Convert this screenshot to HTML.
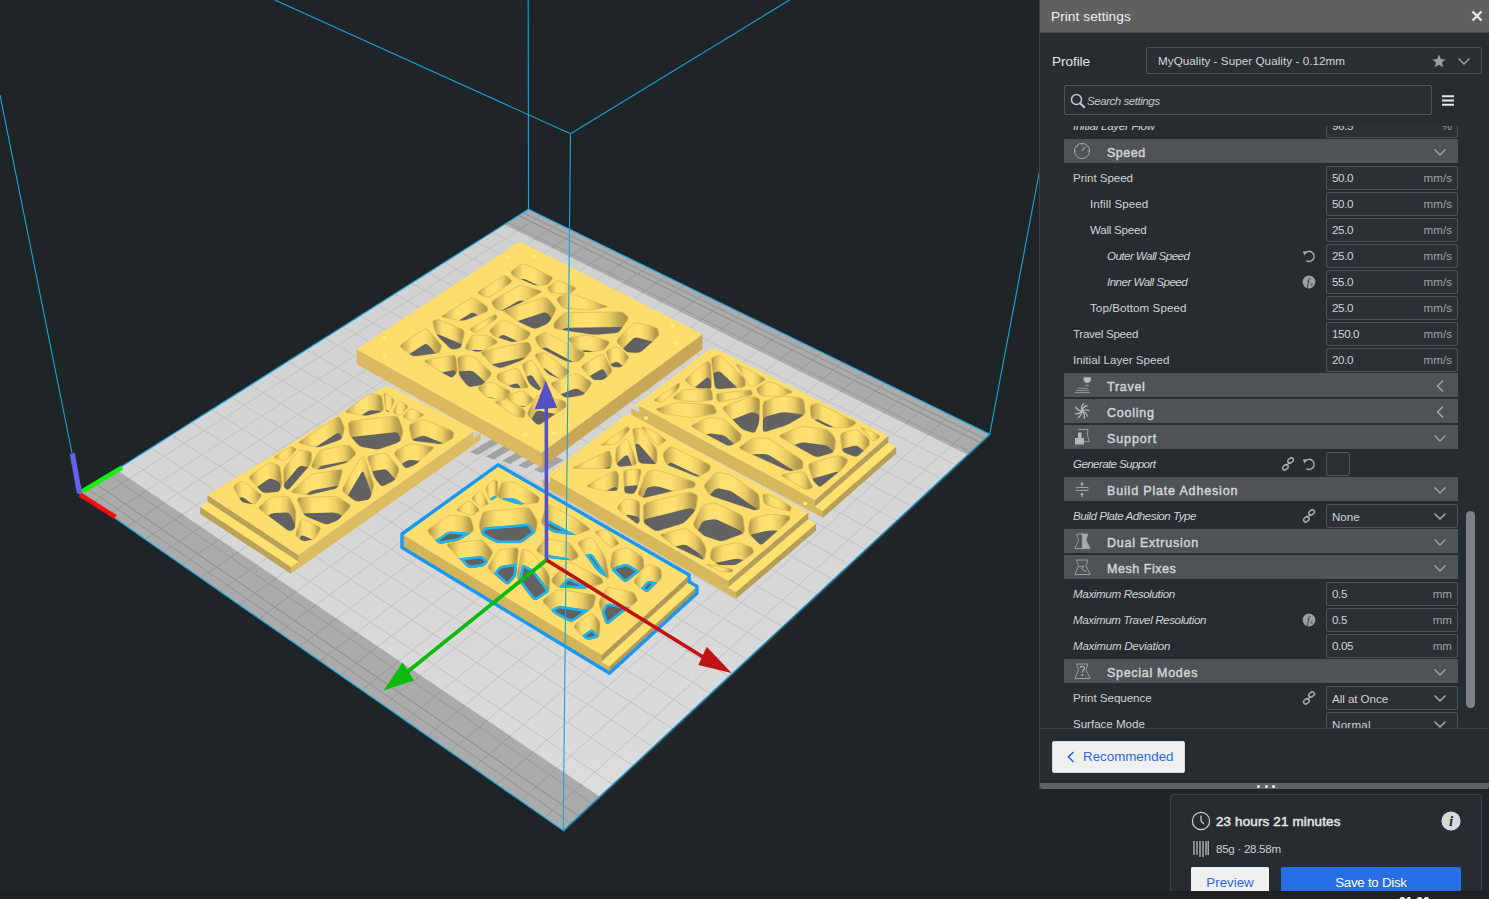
<!DOCTYPE html>
<html lang="en"><head><meta charset="utf-8"><title>Cura</title>
<style>
*{box-sizing:border-box;margin:0;padding:0}
html,body{width:1489px;height:899px;overflow:hidden;background:#1f2427;font-family:"Liberation Sans",sans-serif;color:#d6d7d7}
#scene{position:absolute;left:0;top:0;width:1489px;height:899px}
#panel{position:absolute;left:1039px;top:0;width:450px;height:789px;background:#272c30;border-left:1px solid #3a4045}
#phead{position:absolute;left:0;top:0;width:449px;height:33px;background:#606060;border-bottom:1px solid #4a4f52}
#phead .t{position:absolute;left:11px;top:9px;font-size:13.6px;color:#f0f0f0;letter-spacing:0.1px}
#phead .x{position:absolute;left:431px;top:10px}
#profile .lbl{position:absolute;left:12px;top:54px;font-size:13.6px;color:#e4e4e4}
#profile .dd{position:absolute;left:106px;top:47px;width:336px;height:27px;border:1px solid #4c5155;border-radius:2px;background:#2a2f33}
#profile .dd span{position:absolute;left:11px;top:6px;font-size:11.7px;color:#d4d5d5;letter-spacing:0.15px}
#profile .star{position:absolute;left:284.6px;top:6px}
#profile .chev{position:absolute;left:310px;top:9px}
#search{position:absolute;left:24px;top:85px;width:368px;height:30px;border:1px solid #50555a;border-radius:2px;background:#292e32}
#search svg{position:absolute;left:5px;top:7px}
#search span{position:absolute;left:22px;top:8px;font-size:11.6px;font-style:italic;color:#c3c5c6;letter-spacing:0.1px}
#burger{position:absolute;left:402px;top:94.6px}
#list{position:absolute;left:24px;top:126px;width:396px;height:603px;overflow:hidden}
#listin{position:absolute;left:0;top:0;width:396px}
.row{position:absolute;left:0;width:394px;height:24px}
.row .l{position:absolute;top:5px;font-size:11.6px;color:#d2d3d4;white-space:nowrap;letter-spacing:0.12px}
.row .l.i{font-style:italic;letter-spacing:0.05px}
.row .box{position:absolute;left:262px;top:0;width:132px;height:24px;border:1px solid #505458;border-radius:2px;background:#2b3034}
.row .box .v{position:absolute;left:5px;top:4px;font-size:11.6px;color:#d2d3d4;letter-spacing:0.1px}
.row .box .u{position:absolute;right:5px;top:4px;font-size:11.6px;color:#9fa2a4;letter-spacing:0.1px}
.row .box svg{position:absolute;left:106px;top:7px}
.row .cb{position:absolute;left:262px;top:0;width:24px;height:24px;border:1px solid #505458;border-radius:2px;background:#2b3034}
.row .ic{position:absolute;top:5px}
.hdr{position:absolute;left:0;width:394px;height:24px;background:#4d5356}
.hdr .l{position:absolute;left:43px;top:6.8px;font-size:12.5px;font-weight:normal;-webkit-text-stroke:0.45px #d4d5d6;color:#d4d5d6;letter-spacing:0.15px}
.hdr .hi{position:absolute;left:9px;top:3px}
.hdr .ch{position:absolute;left:369px;top:9px}
#sb{position:absolute;left:426px;top:511px;width:9px;height:197px;border-radius:4.5px;background:#7e8285}
#divider{position:absolute;left:0;top:728px;width:449px;height:1px;background:#3d4246}
#rec{position:absolute;left:12px;top:741px;width:133px;height:32px;background:#f0f0f0;border-radius:2px;border:1px solid #d8d8d8}
#rec svg{position:absolute;left:14px;top:9px}
#rec span{position:absolute;left:30px;top:7px;font-size:13.3px;color:#2c6ae0;letter-spacing:0.1px}
#drag{position:absolute;left:0;top:783px;width:449px;height:6px;background:#606366;border-radius:0 0 3px 3px}
#drag i{position:absolute;top:1.5px;width:3px;height:3px;border-radius:50%;background:#f4f4f4}
#drag i:nth-child(1){left:217px}#drag i:nth-child(2){left:225px}#drag i:nth-child(3){left:232px}
#action{position:absolute;left:1170px;top:794px;width:312px;height:110px;background:#272c30;border:1px solid #3d4347;border-radius:3px}
#action .clock{position:absolute;left:20px;top:16px}
#action .time{position:absolute;left:45px;top:19px;font-size:13.4px;font-weight:normal;-webkit-text-stroke:0.5px #e2e3e3;color:#e2e3e3;letter-spacing:-0.1px}
#action .info{position:absolute;left:270px;top:16px}
#action .mat{position:absolute;left:22px;top:45px}
#action .mattxt{position:absolute;left:45px;top:47px;font-size:11.6px;color:#cfd0d1;letter-spacing:0.1px}
.btn{position:absolute;top:72px;height:30px;border-radius:1.5px;text-align:center;font-size:13.3px;line-height:31px}
.btn.prev{left:20px;width:78px;background:#f0f0f0;color:#2c6ae0}
.btn.save{left:110px;width:180px;background:#266de6;color:#fff;letter-spacing:-0.26px}
#taskbar{position:absolute;left:0;top:891px;width:1489px;height:8px;background:#202123;overflow:hidden}
#taskbar span{position:absolute;left:1399px;top:4px;font-size:12px;font-weight:bold;color:#fff}
</style></head>
<body>
<svg id="scene" width="1489" height="899" viewBox="0 0 1489 899">
<defs><linearGradient id="wall" x1="0" y1="0" x2="1" y2="0"><stop offset="0" stop-color="#a8914b"/><stop offset="0.1" stop-color="#d2b45a"/><stop offset="0.28" stop-color="#fbde6d"/><stop offset="0.55" stop-color="#ffe272"/><stop offset="0.74" stop-color="#ebcc63"/><stop offset="0.9" stop-color="#b9a052"/><stop offset="1" stop-color="#a8924c"/></linearGradient><linearGradient id="plate" gradientUnits="userSpaceOnUse" x1="0" y1="210" x2="0" y2="830"><stop offset="0" stop-color="#d0d0d0"/><stop offset="1" stop-color="#dddddd"/></linearGradient><clipPath id="plateclip"><polygon points="528.5,209.2 989.7,434.2 563.2,830.5 79.2,493.3"/></clipPath></defs>
<polygon points="528.5,209.2 989.7,434.2 563.2,830.5 79.2,493.3" fill="url(#plate)" />
<polygon points="116.5,469.7 599.7,796.5 563.2,830.5 79.2,493.3" fill="#acacac" />
<polygon points="528.5,209.2 989.7,434.2 967.7,454.7 504.5,224.4" fill="#acacac" />
<line x1="87.1" y1="488.3" x2="571.0" y2="823.3" stroke="#959595" stroke-width="1.0" opacity="0.75"/>
<line x1="523.5" y1="212.4" x2="985.1" y2="438.5" stroke="#959595" stroke-width="1.0" opacity="0.75"/>
<line x1="95.0" y1="483.3" x2="578.7" y2="816.1" stroke="#7e7e7e" stroke-width="1.0" opacity="0.75"/>
<line x1="518.5" y1="215.5" x2="980.5" y2="442.7" stroke="#7e7e7e" stroke-width="1.0" opacity="0.75"/>
<g opacity="0.7"><line x1="541.2" y1="215.4" x2="92.1" y2="502.3" stroke="#b9bcbf" stroke-width="1.0" /><line x1="558.4" y1="223.8" x2="109.6" y2="514.5" stroke="#b9bcbf" stroke-width="1.0" /><line x1="575.7" y1="232.2" x2="127.3" y2="526.8" stroke="#b9bcbf" stroke-width="1.0" /><line x1="593.3" y1="240.8" x2="145.3" y2="539.3" stroke="#b9bcbf" stroke-width="1.0" /><line x1="611.1" y1="249.5" x2="163.5" y2="552.0" stroke="#b9bcbf" stroke-width="1.0" /><line x1="629.1" y1="258.3" x2="182.0" y2="564.9" stroke="#b9bcbf" stroke-width="1.0" /><line x1="647.3" y1="267.2" x2="200.8" y2="578.0" stroke="#b9bcbf" stroke-width="1.0" /><line x1="665.8" y1="276.2" x2="219.9" y2="591.3" stroke="#b9bcbf" stroke-width="1.0" /><line x1="684.4" y1="285.3" x2="239.2" y2="604.8" stroke="#b9bcbf" stroke-width="1.0" /><line x1="703.3" y1="294.5" x2="258.9" y2="618.5" stroke="#b9bcbf" stroke-width="1.0" /><line x1="722.5" y1="303.8" x2="278.9" y2="632.4" stroke="#b9bcbf" stroke-width="1.0" /><line x1="741.9" y1="313.3" x2="299.1" y2="646.5" stroke="#b9bcbf" stroke-width="1.0" /><line x1="761.5" y1="322.9" x2="319.7" y2="660.9" stroke="#b9bcbf" stroke-width="1.0" /><line x1="781.4" y1="332.6" x2="340.6" y2="675.4" stroke="#b9bcbf" stroke-width="1.0" /><line x1="801.6" y1="342.4" x2="361.9" y2="690.2" stroke="#b9bcbf" stroke-width="1.0" /><line x1="822.0" y1="352.4" x2="383.4" y2="705.3" stroke="#b9bcbf" stroke-width="1.0" /><line x1="842.7" y1="362.5" x2="405.4" y2="720.5" stroke="#b9bcbf" stroke-width="1.0" /><line x1="863.6" y1="372.7" x2="427.7" y2="736.1" stroke="#b9bcbf" stroke-width="1.0" /><line x1="884.9" y1="383.1" x2="450.3" y2="751.8" stroke="#b9bcbf" stroke-width="1.0" /><line x1="906.4" y1="393.6" x2="473.3" y2="767.9" stroke="#b9bcbf" stroke-width="1.0" /><line x1="928.2" y1="404.2" x2="496.7" y2="784.2" stroke="#b9bcbf" stroke-width="1.0" /><line x1="950.3" y1="415.0" x2="520.6" y2="800.8" stroke="#b9bcbf" stroke-width="1.0" /><line x1="972.7" y1="425.9" x2="544.8" y2="817.7" stroke="#b9bcbf" stroke-width="1.0" /><line x1="522.9" y1="212.7" x2="984.6" y2="439.0" stroke="#b9bcbf" stroke-width="1.0" /><line x1="507.7" y1="222.4" x2="970.5" y2="452.0" stroke="#b9bcbf" stroke-width="1.0" /><line x1="492.2" y1="232.2" x2="956.3" y2="465.3" stroke="#b9bcbf" stroke-width="1.0" /><line x1="476.5" y1="242.1" x2="941.8" y2="478.7" stroke="#b9bcbf" stroke-width="1.0" /><line x1="460.6" y1="252.2" x2="927.0" y2="492.4" stroke="#b9bcbf" stroke-width="1.0" /><line x1="444.4" y1="262.4" x2="912.0" y2="506.4" stroke="#b9bcbf" stroke-width="1.0" /><line x1="428.1" y1="272.7" x2="896.8" y2="520.5" stroke="#b9bcbf" stroke-width="1.0" /><line x1="411.4" y1="283.2" x2="881.3" y2="534.9" stroke="#b9bcbf" stroke-width="1.0" /><line x1="394.6" y1="293.9" x2="865.5" y2="549.6" stroke="#b9bcbf" stroke-width="1.0" /><line x1="377.5" y1="304.7" x2="849.5" y2="564.5" stroke="#b9bcbf" stroke-width="1.0" /><line x1="360.1" y1="315.7" x2="833.2" y2="579.6" stroke="#b9bcbf" stroke-width="1.0" /><line x1="342.5" y1="326.8" x2="816.6" y2="595.0" stroke="#b9bcbf" stroke-width="1.0" /><line x1="324.7" y1="338.1" x2="799.7" y2="610.7" stroke="#b9bcbf" stroke-width="1.0" /><line x1="306.5" y1="349.6" x2="782.5" y2="626.7" stroke="#b9bcbf" stroke-width="1.0" /><line x1="288.1" y1="361.2" x2="765.0" y2="642.9" stroke="#b9bcbf" stroke-width="1.0" /><line x1="269.4" y1="373.0" x2="747.2" y2="659.5" stroke="#b9bcbf" stroke-width="1.0" /><line x1="250.4" y1="385.0" x2="729.1" y2="676.4" stroke="#b9bcbf" stroke-width="1.0" /><line x1="231.1" y1="397.2" x2="710.6" y2="693.5" stroke="#b9bcbf" stroke-width="1.0" /><line x1="211.5" y1="409.6" x2="691.8" y2="711.0" stroke="#b9bcbf" stroke-width="1.0" /><line x1="191.6" y1="422.2" x2="672.6" y2="728.8" stroke="#b9bcbf" stroke-width="1.0" /><line x1="171.4" y1="435.0" x2="653.1" y2="747.0" stroke="#b9bcbf" stroke-width="1.0" /><line x1="150.9" y1="448.0" x2="633.2" y2="765.5" stroke="#b9bcbf" stroke-width="1.0" /><line x1="130.0" y1="461.2" x2="612.9" y2="784.3" stroke="#b9bcbf" stroke-width="1.0" /><line x1="108.8" y1="474.6" x2="592.2" y2="803.6" stroke="#b9bcbf" stroke-width="1.0" /><line x1="87.2" y1="488.2" x2="571.1" y2="823.2" stroke="#b9bcbf" stroke-width="1.0" /></g>
<clipPath id="bandclip"><polygon points="116.5,469.7 599.7,796.5 563.2,830.5 79.2,493.3"/><polygon points="528.5,209.2 989.7,434.2 967.7,454.7 504.5,224.4"/></clipPath>
<g opacity="0.55" clip-path="url(#bandclip)"><line x1="541.2" y1="215.4" x2="92.1" y2="502.3" stroke="#7c7e80" stroke-width="1.0" /><line x1="558.4" y1="223.8" x2="109.6" y2="514.5" stroke="#7c7e80" stroke-width="1.0" /><line x1="575.7" y1="232.2" x2="127.3" y2="526.8" stroke="#7c7e80" stroke-width="1.0" /><line x1="593.3" y1="240.8" x2="145.3" y2="539.3" stroke="#7c7e80" stroke-width="1.0" /><line x1="611.1" y1="249.5" x2="163.5" y2="552.0" stroke="#7c7e80" stroke-width="1.0" /><line x1="629.1" y1="258.3" x2="182.0" y2="564.9" stroke="#7c7e80" stroke-width="1.0" /><line x1="647.3" y1="267.2" x2="200.8" y2="578.0" stroke="#7c7e80" stroke-width="1.0" /><line x1="665.8" y1="276.2" x2="219.9" y2="591.3" stroke="#7c7e80" stroke-width="1.0" /><line x1="684.4" y1="285.3" x2="239.2" y2="604.8" stroke="#7c7e80" stroke-width="1.0" /><line x1="703.3" y1="294.5" x2="258.9" y2="618.5" stroke="#7c7e80" stroke-width="1.0" /><line x1="722.5" y1="303.8" x2="278.9" y2="632.4" stroke="#7c7e80" stroke-width="1.0" /><line x1="741.9" y1="313.3" x2="299.1" y2="646.5" stroke="#7c7e80" stroke-width="1.0" /><line x1="761.5" y1="322.9" x2="319.7" y2="660.9" stroke="#7c7e80" stroke-width="1.0" /><line x1="781.4" y1="332.6" x2="340.6" y2="675.4" stroke="#7c7e80" stroke-width="1.0" /><line x1="801.6" y1="342.4" x2="361.9" y2="690.2" stroke="#7c7e80" stroke-width="1.0" /><line x1="822.0" y1="352.4" x2="383.4" y2="705.3" stroke="#7c7e80" stroke-width="1.0" /><line x1="842.7" y1="362.5" x2="405.4" y2="720.5" stroke="#7c7e80" stroke-width="1.0" /><line x1="863.6" y1="372.7" x2="427.7" y2="736.1" stroke="#7c7e80" stroke-width="1.0" /><line x1="884.9" y1="383.1" x2="450.3" y2="751.8" stroke="#7c7e80" stroke-width="1.0" /><line x1="906.4" y1="393.6" x2="473.3" y2="767.9" stroke="#7c7e80" stroke-width="1.0" /><line x1="928.2" y1="404.2" x2="496.7" y2="784.2" stroke="#7c7e80" stroke-width="1.0" /><line x1="950.3" y1="415.0" x2="520.6" y2="800.8" stroke="#7c7e80" stroke-width="1.0" /><line x1="972.7" y1="425.9" x2="544.8" y2="817.7" stroke="#7c7e80" stroke-width="1.0" /><line x1="522.9" y1="212.7" x2="984.6" y2="439.0" stroke="#7c7e80" stroke-width="1.0" /><line x1="507.7" y1="222.4" x2="970.5" y2="452.0" stroke="#7c7e80" stroke-width="1.0" /><line x1="492.2" y1="232.2" x2="956.3" y2="465.3" stroke="#7c7e80" stroke-width="1.0" /><line x1="476.5" y1="242.1" x2="941.8" y2="478.7" stroke="#7c7e80" stroke-width="1.0" /><line x1="460.6" y1="252.2" x2="927.0" y2="492.4" stroke="#7c7e80" stroke-width="1.0" /><line x1="444.4" y1="262.4" x2="912.0" y2="506.4" stroke="#7c7e80" stroke-width="1.0" /><line x1="428.1" y1="272.7" x2="896.8" y2="520.5" stroke="#7c7e80" stroke-width="1.0" /><line x1="411.4" y1="283.2" x2="881.3" y2="534.9" stroke="#7c7e80" stroke-width="1.0" /><line x1="394.6" y1="293.9" x2="865.5" y2="549.6" stroke="#7c7e80" stroke-width="1.0" /><line x1="377.5" y1="304.7" x2="849.5" y2="564.5" stroke="#7c7e80" stroke-width="1.0" /><line x1="360.1" y1="315.7" x2="833.2" y2="579.6" stroke="#7c7e80" stroke-width="1.0" /><line x1="342.5" y1="326.8" x2="816.6" y2="595.0" stroke="#7c7e80" stroke-width="1.0" /><line x1="324.7" y1="338.1" x2="799.7" y2="610.7" stroke="#7c7e80" stroke-width="1.0" /><line x1="306.5" y1="349.6" x2="782.5" y2="626.7" stroke="#7c7e80" stroke-width="1.0" /><line x1="288.1" y1="361.2" x2="765.0" y2="642.9" stroke="#7c7e80" stroke-width="1.0" /><line x1="269.4" y1="373.0" x2="747.2" y2="659.5" stroke="#7c7e80" stroke-width="1.0" /><line x1="250.4" y1="385.0" x2="729.1" y2="676.4" stroke="#7c7e80" stroke-width="1.0" /><line x1="231.1" y1="397.2" x2="710.6" y2="693.5" stroke="#7c7e80" stroke-width="1.0" /><line x1="211.5" y1="409.6" x2="691.8" y2="711.0" stroke="#7c7e80" stroke-width="1.0" /><line x1="191.6" y1="422.2" x2="672.6" y2="728.8" stroke="#7c7e80" stroke-width="1.0" /><line x1="171.4" y1="435.0" x2="653.1" y2="747.0" stroke="#7c7e80" stroke-width="1.0" /><line x1="150.9" y1="448.0" x2="633.2" y2="765.5" stroke="#7c7e80" stroke-width="1.0" /><line x1="130.0" y1="461.2" x2="612.9" y2="784.3" stroke="#7c7e80" stroke-width="1.0" /><line x1="108.8" y1="474.6" x2="592.2" y2="803.6" stroke="#7c7e80" stroke-width="1.0" /><line x1="87.2" y1="488.2" x2="571.1" y2="823.2" stroke="#7c7e80" stroke-width="1.0" /></g>
<polygon points="563.2,830.5 989.7,434.2 989.7,436.8 563.2,833.1" fill="#3a3e41" />
<polygon points="528.5,209.2 989.7,434.2 563.2,830.5 79.2,493.3" fill="none" stroke="#18a4dc" stroke-width="1.2"/>
<line x1="528.5" y1="209.2" x2="528.2" y2="0.0" stroke="#18a4dc" stroke-width="1.1" />
<polygon points="470.0,452.0 492.0,439.0 500.0,442.0 478.0,455.0" fill="#a3a3a3" /><polygon points="486.0,456.5 508.0,443.5 516.0,446.5 494.0,459.5" fill="#a3a3a3" /><polygon points="502.0,461.0 524.0,448.0 532.0,451.0 510.0,464.0" fill="#a3a3a3" /><polygon points="518.0,465.5 540.0,452.5 548.0,455.5 526.0,468.5" fill="#a3a3a3" /><polygon points="534.0,470.0 556.0,457.0 564.0,460.0 542.0,473.0" fill="#a3a3a3" /><polygon points="550.0,474.5 572.0,461.5 580.0,464.5 558.0,477.5" fill="#a3a3a3" /><polygon points="566.0,479.0 588.0,466.0 596.0,469.0 574.0,482.0" fill="#a3a3a3" /><polygon points="582.0,483.5 604.0,470.5 612.0,473.5 590.0,486.5" fill="#a3a3a3" /><polygon points="598.0,488.0 620.0,475.0 628.0,478.0 606.0,491.0" fill="#a3a3a3" /><polygon points="585.0,470.0 597.0,461.0 603.0,466.0 591.0,475.0" fill="#a8a8a8" /><polygon points="602.0,459.0 614.0,450.0 620.0,455.0 608.0,464.0" fill="#a8a8a8" /><polygon points="619.0,448.0 631.0,439.0 637.0,444.0 625.0,453.0" fill="#a8a8a8" /><polygon points="636.0,437.0 648.0,428.0 654.0,433.0 642.0,442.0" fill="#a8a8a8" /><polygon points="653.0,426.0 665.0,417.0 671.0,422.0 659.0,431.0" fill="#a8a8a8" /><polygon points="670.0,415.0 682.0,406.0 688.0,411.0 676.0,420.0" fill="#a8a8a8" /><polygon points="687.0,404.0 699.0,395.0 705.0,400.0 693.0,409.0" fill="#a8a8a8" />
<polygon points="385.0,386.0 473.3,431.7 480.7,433.3 392.4,387.6" fill="#fddd6b" /><polygon points="473.3,438.4 480.7,433.3 480.7,440.0 473.3,445.2" fill="#dcbc60" /><polygon points="298.3,555.0 473.3,431.7 473.3,445.2 298.3,568.5" fill="#dcbc60" /><polygon points="298.3,561.8 290.9,566.9 290.9,573.7 298.3,568.5" fill="#dcbc60" /><polygon points="207.5,495.0 298.3,555.0 298.3,561.8 207.5,501.8" fill="#baa257" /><polygon points="207.5,501.8 298.3,561.8 290.9,566.9 200.1,506.9" fill="#ffe16d" /><polygon points="200.1,506.9 290.9,566.9 290.9,573.7 200.1,513.7" fill="#baa257" /><polygon points="385.0,386.0 473.3,431.7 298.3,555.0 207.5,495.0" fill="#fddd6b" /><clipPath id="h1"><path d="M347.7 412.7Q344.3 412.1 347.1 410.0L366.2 395.9Q369.1 393.9 372.2 394.2L378.4 394.8Q381.6 395.1 382.1 398.6L383.4 407.6Q383.9 411.0 380.5 412.0L370.1 414.8Q366.7 415.7 363.3 415.2Z"/></clipPath><path d="M347.7 412.7Q344.3 412.1 347.1 410.0L366.2 395.9Q369.1 393.9 372.2 394.2L378.4 394.8Q381.6 395.1 382.1 398.6L383.4 407.6Q383.9 411.0 380.5 412.0L370.1 414.8Q366.7 415.7 363.3 415.2Z" fill="url(#wall)" stroke="#d9b952" stroke-width="0.7"/><g clip-path="url(#h1)"><path d="M347.7 412.7Q344.3 412.1 347.1 410.0L366.2 395.9Q369.1 393.9 372.2 394.2L378.4 394.8Q381.6 395.1 382.1 398.6L383.4 407.6Q383.9 411.0 380.5 412.0L370.1 414.8Q366.7 415.7 363.3 415.2Z" transform="translate(0,16)" fill="#626262"/></g><clipPath id="h2"><path d="M383.9 395.2Q383.5 391.8 386.4 393.7L392.2 397.7Q395.1 399.7 393.6 402.9L390.7 409.3Q389.2 412.5 388.3 411.9L386.6 410.8Q385.7 410.3 385.3 406.8Z"/></clipPath><path d="M383.9 395.2Q383.5 391.8 386.4 393.7L392.2 397.7Q395.1 399.7 393.6 402.9L390.7 409.3Q389.2 412.5 388.3 411.9L386.6 410.8Q385.7 410.3 385.3 406.8Z" fill="url(#wall)" stroke="#d9b952" stroke-width="0.7"/><g clip-path="url(#h2)"><path d="M383.9 395.2Q383.5 391.8 386.4 393.7L392.2 397.7Q395.1 399.7 393.6 402.9L390.7 409.3Q389.2 412.5 388.3 411.9L386.6 410.8Q385.7 410.3 385.3 406.8Z" transform="translate(0,16)" fill="#626262"/></g><clipPath id="h3"><path d="M394.7 413.8Q392.7 413.2 394.1 410.0L397.0 403.5Q398.5 400.4 401.1 401.8L406.3 404.7Q408.9 406.2 406.9 408.5L402.8 413.2Q400.8 415.6 398.8 415.0Z"/></clipPath><path d="M394.7 413.8Q392.7 413.2 394.1 410.0L397.0 403.5Q398.5 400.4 401.1 401.8L406.3 404.7Q408.9 406.2 406.9 408.5L402.8 413.2Q400.8 415.6 398.8 415.0Z" fill="url(#wall)" stroke="#d9b952" stroke-width="0.7"/><g clip-path="url(#h3)"><path d="M394.7 413.8Q392.7 413.2 394.1 410.0L397.0 403.5Q398.5 400.4 401.1 401.8L406.3 404.7Q408.9 406.2 406.9 408.5L402.8 413.2Q400.8 415.6 398.8 415.0Z" transform="translate(0,16)" fill="#626262"/></g><clipPath id="h4"><path d="M404.9 418.1Q402.0 417.1 404.3 414.8L408.9 410.1Q411.1 407.8 414.3 409.4L421.8 413.3Q425.0 414.8 422.1 416.3L416.4 419.3Q413.5 420.8 410.6 419.9Z"/></clipPath><path d="M404.9 418.1Q402.0 417.1 404.3 414.8L408.9 410.1Q411.1 407.8 414.3 409.4L421.8 413.3Q425.0 414.8 422.1 416.3L416.4 419.3Q413.5 420.8 410.6 419.9Z" fill="url(#wall)" stroke="#d9b952" stroke-width="0.7"/><g clip-path="url(#h4)"><path d="M404.9 418.1Q402.0 417.1 404.3 414.8L408.9 410.1Q411.1 407.8 414.3 409.4L421.8 413.3Q425.0 414.8 422.1 416.3L416.4 419.3Q413.5 420.8 410.6 419.9Z" transform="translate(0,16)" fill="#626262"/></g><clipPath id="h5"><path d="M348.6 424.9Q348.3 421.5 351.8 421.1L394.3 416.2Q397.8 415.8 399.0 419.1L402.3 428.3Q403.5 431.6 402.6 434.1L401.0 439.2Q400.1 441.7 396.8 442.9L380.9 448.6Q377.6 449.8 374.1 449.1L362.9 447.0Q359.5 446.3 357.1 443.7L351.7 437.6Q349.4 435.0 349.2 431.6Z"/></clipPath><path d="M348.6 424.9Q348.3 421.5 351.8 421.1L394.3 416.2Q397.8 415.8 399.0 419.1L402.3 428.3Q403.5 431.6 402.6 434.1L401.0 439.2Q400.1 441.7 396.8 442.9L380.9 448.6Q377.6 449.8 374.1 449.1L362.9 447.0Q359.5 446.3 357.1 443.7L351.7 437.6Q349.4 435.0 349.2 431.6Z" fill="url(#wall)" stroke="#d9b952" stroke-width="0.7"/><g clip-path="url(#h5)"><path d="M348.6 424.9Q348.3 421.5 351.8 421.1L394.3 416.2Q397.8 415.8 399.0 419.1L402.3 428.3Q403.5 431.6 402.6 434.1L401.0 439.2Q400.1 441.7 396.8 442.9L380.9 448.6Q377.6 449.8 374.1 449.1L362.9 447.0Q359.5 446.3 357.1 443.7L351.7 437.6Q349.4 435.0 349.2 431.6Z" transform="translate(0,16)" fill="#626262"/></g><clipPath id="h6"><path d="M409.5 428.3Q408.8 424.9 412.1 423.6L420.1 420.4Q423.4 419.2 426.6 420.5L450.7 430.3Q453.9 431.7 453.7 433.4L453.1 436.8Q452.8 438.5 450.0 439.9L444.4 442.8Q441.6 444.2 438.1 443.8L415.6 441.1Q412.1 440.7 411.4 437.3Z"/></clipPath><path d="M409.5 428.3Q408.8 424.9 412.1 423.6L420.1 420.4Q423.4 419.2 426.6 420.5L450.7 430.3Q453.9 431.7 453.7 433.4L453.1 436.8Q452.8 438.5 450.0 439.9L444.4 442.8Q441.6 444.2 438.1 443.8L415.6 441.1Q412.1 440.7 411.4 437.3Z" fill="url(#wall)" stroke="#d9b952" stroke-width="0.7"/><g clip-path="url(#h6)"><path d="M409.5 428.3Q408.8 424.9 412.1 423.6L420.1 420.4Q423.4 419.2 426.6 420.5L450.7 430.3Q453.9 431.7 453.7 433.4L453.1 436.8Q452.8 438.5 450.0 439.9L444.4 442.8Q441.6 444.2 438.1 443.8L415.6 441.1Q412.1 440.7 411.4 437.3Z" transform="translate(0,16)" fill="#626262"/></g><clipPath id="h7"><path d="M300.9 443.6Q297.5 442.8 300.4 440.9L336.2 417.7Q339.1 415.7 340.6 418.8L343.4 425.1Q344.9 428.2 344.0 431.0L342.4 436.7Q341.5 439.5 338.2 440.6L320.9 446.4Q317.6 447.5 314.2 446.7Z"/></clipPath><path d="M300.9 443.6Q297.5 442.8 300.4 440.9L336.2 417.7Q339.1 415.7 340.6 418.8L343.4 425.1Q344.9 428.2 344.0 431.0L342.4 436.7Q341.5 439.5 338.2 440.6L320.9 446.4Q317.6 447.5 314.2 446.7Z" fill="url(#wall)" stroke="#d9b952" stroke-width="0.7"/><g clip-path="url(#h7)"><path d="M300.9 443.6Q297.5 442.8 300.4 440.9L336.2 417.7Q339.1 415.7 340.6 418.8L343.4 425.1Q344.9 428.2 344.0 431.0L342.4 436.7Q341.5 439.5 338.2 440.6L320.9 446.4Q317.6 447.5 314.2 446.7Z" transform="translate(0,16)" fill="#626262"/></g><clipPath id="h8"><path d="M275.8 458.3Q273.0 457.4 275.9 455.6L288.3 447.8Q291.3 445.9 292.7 446.8L295.6 448.5Q297.0 449.4 294.4 451.8L286.9 458.7Q284.3 461.0 281.5 460.1Z"/></clipPath><path d="M275.8 458.3Q273.0 457.4 275.9 455.6L288.3 447.8Q291.3 445.9 292.7 446.8L295.6 448.5Q297.0 449.4 294.4 451.8L286.9 458.7Q284.3 461.0 281.5 460.1Z" fill="url(#wall)" stroke="#d9b952" stroke-width="0.7"/><g clip-path="url(#h8)"><path d="M275.8 458.3Q273.0 457.4 275.9 455.6L288.3 447.8Q291.3 445.9 292.7 446.8L295.6 448.5Q297.0 449.4 294.4 451.8L286.9 458.7Q284.3 461.0 281.5 460.1Z" transform="translate(0,16)" fill="#626262"/></g><clipPath id="h9"><path d="M283.6 472.3Q283.5 468.8 285.8 466.1L297.3 452.2Q299.5 449.5 302.6 450.1L308.8 451.2Q311.9 451.8 311.7 454.9L311.2 461.1Q310.9 464.2 308.6 466.8L290.5 487.6Q288.2 490.2 287.1 489.4L284.8 487.7Q283.7 486.8 283.7 483.3Z"/></clipPath><path d="M283.6 472.3Q283.5 468.8 285.8 466.1L297.3 452.2Q299.5 449.5 302.6 450.1L308.8 451.2Q311.9 451.8 311.7 454.9L311.2 461.1Q310.9 464.2 308.6 466.8L290.5 487.6Q288.2 490.2 287.1 489.4L284.8 487.7Q283.7 486.8 283.7 483.3Z" fill="url(#wall)" stroke="#d9b952" stroke-width="0.7"/><g clip-path="url(#h9)"><path d="M283.6 472.3Q283.5 468.8 285.8 466.1L297.3 452.2Q299.5 449.5 302.6 450.1L308.8 451.2Q311.9 451.8 311.7 454.9L311.2 461.1Q310.9 464.2 308.6 466.8L290.5 487.6Q288.2 490.2 287.1 489.4L284.8 487.7Q283.7 486.8 283.7 483.3Z" transform="translate(0,16)" fill="#626262"/></g><clipPath id="h10"><path d="M312.8 467.8Q310.5 467.2 312.2 464.1L317.8 453.3Q319.4 450.2 322.9 449.6L345.5 445.3Q348.9 444.6 350.9 446.9L354.8 451.4Q356.8 453.7 354.3 456.0L349.3 460.5Q346.8 462.8 343.4 463.6L322.9 468.7Q319.5 469.5 317.2 469.0Z"/></clipPath><path d="M312.8 467.8Q310.5 467.2 312.2 464.1L317.8 453.3Q319.4 450.2 322.9 449.6L345.5 445.3Q348.9 444.6 350.9 446.9L354.8 451.4Q356.8 453.7 354.3 456.0L349.3 460.5Q346.8 462.8 343.4 463.6L322.9 468.7Q319.5 469.5 317.2 469.0Z" fill="url(#wall)" stroke="#d9b952" stroke-width="0.7"/><g clip-path="url(#h10)"><path d="M312.8 467.8Q310.5 467.2 312.2 464.1L317.8 453.3Q319.4 450.2 322.9 449.6L345.5 445.3Q348.9 444.6 350.9 446.9L354.8 451.4Q356.8 453.7 354.3 456.0L349.3 460.5Q346.8 462.8 343.4 463.6L322.9 468.7Q319.5 469.5 317.2 469.0Z" transform="translate(0,16)" fill="#626262"/></g><clipPath id="h11"><path d="M250.6 479.7Q248.2 477.1 251.1 475.1L266.8 464.3Q269.7 462.3 272.3 463.1L277.4 464.9Q279.9 465.7 280.4 469.2L281.8 480.5Q282.3 483.9 281.4 485.9L279.7 489.9Q278.8 491.9 275.3 492.1L266.4 492.8Q262.9 493.0 260.5 490.4Z"/></clipPath><path d="M250.6 479.7Q248.2 477.1 251.1 475.1L266.8 464.3Q269.7 462.3 272.3 463.1L277.4 464.9Q279.9 465.7 280.4 469.2L281.8 480.5Q282.3 483.9 281.4 485.9L279.7 489.9Q278.8 491.9 275.3 492.1L266.4 492.8Q262.9 493.0 260.5 490.4Z" fill="url(#wall)" stroke="#d9b952" stroke-width="0.7"/><g clip-path="url(#h11)"><path d="M250.6 479.7Q248.2 477.1 251.1 475.1L266.8 464.3Q269.7 462.3 272.3 463.1L277.4 464.9Q279.9 465.7 280.4 469.2L281.8 480.5Q282.3 483.9 281.4 485.9L279.7 489.9Q278.8 491.9 275.3 492.1L266.4 492.8Q262.9 493.0 260.5 490.4Z" transform="translate(0,16)" fill="#626262"/></g><clipPath id="h12"><path d="M234.5 489.2Q232.8 486.2 235.1 484.7L239.6 481.9Q241.9 480.4 244.7 482.5L259.6 493.2Q262.4 495.3 260.4 497.6L256.5 502.2Q254.5 504.4 251.3 503.9L245.0 502.8Q241.8 502.2 240.1 499.2Z"/></clipPath><path d="M234.5 489.2Q232.8 486.2 235.1 484.7L239.6 481.9Q241.9 480.4 244.7 482.5L259.6 493.2Q262.4 495.3 260.4 497.6L256.5 502.2Q254.5 504.4 251.3 503.9L245.0 502.8Q241.8 502.2 240.1 499.2Z" fill="url(#wall)" stroke="#d9b952" stroke-width="0.7"/><g clip-path="url(#h12)"><path d="M234.5 489.2Q232.8 486.2 235.1 484.7L239.6 481.9Q241.9 480.4 244.7 482.5L259.6 493.2Q262.4 495.3 260.4 497.6L256.5 502.2Q254.5 504.4 251.3 503.9L245.0 502.8Q241.8 502.2 240.1 499.2Z" transform="translate(0,16)" fill="#626262"/></g><clipPath id="h13"><path d="M293.7 493.0Q290.2 492.5 292.9 490.3L308.8 476.6Q311.4 474.3 314.9 473.7L339.6 469.5Q343.1 468.9 342.1 472.3L338.6 484.7Q337.6 488.1 334.2 488.9L312.6 494.1Q309.2 494.9 305.7 494.5Z"/></clipPath><path d="M293.7 493.0Q290.2 492.5 292.9 490.3L308.8 476.6Q311.4 474.3 314.9 473.7L339.6 469.5Q343.1 468.9 342.1 472.3L338.6 484.7Q337.6 488.1 334.2 488.9L312.6 494.1Q309.2 494.9 305.7 494.5Z" fill="url(#wall)" stroke="#d9b952" stroke-width="0.7"/><g clip-path="url(#h13)"><path d="M293.7 493.0Q290.2 492.5 292.9 490.3L308.8 476.6Q311.4 474.3 314.9 473.7L339.6 469.5Q343.1 468.9 342.1 472.3L338.6 484.7Q337.6 488.1 334.2 488.9L312.6 494.1Q309.2 494.9 305.7 494.5Z" transform="translate(0,16)" fill="#626262"/></g><clipPath id="h14"><path d="M344.1 492.5Q341.3 490.4 343.1 487.4L361.0 457.3Q362.8 454.3 363.9 457.1L366.2 462.7Q367.3 465.4 368.4 468.8L373.1 482.6Q374.2 485.9 373.1 489.2L370.7 496.2Q369.6 499.5 366.2 500.0L359.4 501.2Q356.0 501.7 353.2 499.6Z"/></clipPath><path d="M344.1 492.5Q341.3 490.4 343.1 487.4L361.0 457.3Q362.8 454.3 363.9 457.1L366.2 462.7Q367.3 465.4 368.4 468.8L373.1 482.6Q374.2 485.9 373.1 489.2L370.7 496.2Q369.6 499.5 366.2 500.0L359.4 501.2Q356.0 501.7 353.2 499.6Z" fill="url(#wall)" stroke="#d9b952" stroke-width="0.7"/><g clip-path="url(#h14)"><path d="M344.1 492.5Q341.3 490.4 343.1 487.4L361.0 457.3Q362.8 454.3 363.9 457.1L366.2 462.7Q367.3 465.4 368.4 468.8L373.1 482.6Q374.2 485.9 373.1 489.2L370.7 496.2Q369.6 499.5 366.2 500.0L359.4 501.2Q356.0 501.7 353.2 499.6Z" transform="translate(0,16)" fill="#626262"/></g><clipPath id="h15"><path d="M368.1 459.5Q366.9 456.2 370.3 455.6L382.7 453.4Q386.1 452.7 388.4 455.4L397.5 466.0Q399.8 468.6 398.6 471.5L396.4 477.2Q395.2 480.0 392.1 481.6L384.7 485.3Q381.6 486.8 379.8 484.6L376.4 480.1Q374.7 477.8 373.5 474.5Z"/></clipPath><path d="M368.1 459.5Q366.9 456.2 370.3 455.6L382.7 453.4Q386.1 452.7 388.4 455.4L397.5 466.0Q399.8 468.6 398.6 471.5L396.4 477.2Q395.2 480.0 392.1 481.6L384.7 485.3Q381.6 486.8 379.8 484.6L376.4 480.1Q374.7 477.8 373.5 474.5Z" fill="url(#wall)" stroke="#d9b952" stroke-width="0.7"/><g clip-path="url(#h15)"><path d="M368.1 459.5Q366.9 456.2 370.3 455.6L382.7 453.4Q386.1 452.7 388.4 455.4L397.5 466.0Q399.8 468.6 398.6 471.5L396.4 477.2Q395.2 480.0 392.1 481.6L384.7 485.3Q381.6 486.8 379.8 484.6L376.4 480.1Q374.7 477.8 373.5 474.5Z" transform="translate(0,16)" fill="#626262"/></g><clipPath id="h16"><path d="M395.3 455.5Q393.2 452.7 396.2 451.0L406.0 445.3Q409.0 443.5 412.5 444.0L431.5 446.6Q435.0 447.1 432.4 449.4L418.5 461.9Q415.9 464.2 413.3 465.4L408.2 467.6Q405.6 468.7 403.4 465.9Z"/></clipPath><path d="M395.3 455.5Q393.2 452.7 396.2 451.0L406.0 445.3Q409.0 443.5 412.5 444.0L431.5 446.6Q435.0 447.1 432.4 449.4L418.5 461.9Q415.9 464.2 413.3 465.4L408.2 467.6Q405.6 468.7 403.4 465.9Z" fill="url(#wall)" stroke="#d9b952" stroke-width="0.7"/><g clip-path="url(#h16)"><path d="M395.3 455.5Q393.2 452.7 396.2 451.0L406.0 445.3Q409.0 443.5 412.5 444.0L431.5 446.6Q435.0 447.1 432.4 449.4L418.5 461.9Q415.9 464.2 413.3 465.4L408.2 467.6Q405.6 468.7 403.4 465.9Z" transform="translate(0,16)" fill="#626262"/></g><clipPath id="h17"><path d="M260.4 509.7Q257.6 507.6 260.4 505.4L268.3 499.5Q271.0 497.3 274.5 497.1L285.7 496.4Q289.2 496.2 290.7 499.3L294.6 507.8Q296.1 510.9 295.9 514.4L295.1 525.6Q294.8 529.0 293.4 529.6L290.6 530.7Q289.2 531.3 286.4 529.2Z"/></clipPath><path d="M260.4 509.7Q257.6 507.6 260.4 505.4L268.3 499.5Q271.0 497.3 274.5 497.1L285.7 496.4Q289.2 496.2 290.7 499.3L294.6 507.8Q296.1 510.9 295.9 514.4L295.1 525.6Q294.8 529.0 293.4 529.6L290.6 530.7Q289.2 531.3 286.4 529.2Z" fill="url(#wall)" stroke="#d9b952" stroke-width="0.7"/><g clip-path="url(#h17)"><path d="M260.4 509.7Q257.6 507.6 260.4 505.4L268.3 499.5Q271.0 497.3 274.5 497.1L285.7 496.4Q289.2 496.2 290.7 499.3L294.6 507.8Q296.1 510.9 295.9 514.4L295.1 525.6Q294.8 529.0 293.4 529.6L290.6 530.7Q289.2 531.3 286.4 529.2Z" transform="translate(0,16)" fill="#626262"/></g><clipPath id="h18"><path d="M297.9 500.8Q296.5 497.6 300.0 497.5L332.5 496.4Q336.0 496.3 339.0 498.1L348.6 503.7Q351.7 505.5 349.3 508.0L340.6 517.6Q338.3 520.2 335.4 521.3L329.7 523.6Q326.9 524.8 323.6 523.5L307.5 516.9Q304.3 515.6 302.9 512.4Z"/></clipPath><path d="M297.9 500.8Q296.5 497.6 300.0 497.5L332.5 496.4Q336.0 496.3 339.0 498.1L348.6 503.7Q351.7 505.5 349.3 508.0L340.6 517.6Q338.3 520.2 335.4 521.3L329.7 523.6Q326.9 524.8 323.6 523.5L307.5 516.9Q304.3 515.6 302.9 512.4Z" fill="url(#wall)" stroke="#d9b952" stroke-width="0.7"/><g clip-path="url(#h18)"><path d="M297.9 500.8Q296.5 497.6 300.0 497.5L332.5 496.4Q336.0 496.3 339.0 498.1L348.6 503.7Q351.7 505.5 349.3 508.0L340.6 517.6Q338.3 520.2 335.4 521.3L329.7 523.6Q326.9 524.8 323.6 523.5L307.5 516.9Q304.3 515.6 302.9 512.4Z" transform="translate(0,16)" fill="#626262"/></g><clipPath id="h19"><path d="M297.2 537.0Q295.2 535.6 296.3 532.3L299.9 521.8Q301.0 518.5 304.2 519.9L318.3 526.2Q321.5 527.6 319.8 530.4L316.4 536.2Q314.8 539.1 311.9 539.6L306.1 540.8Q303.2 541.4 301.2 539.9Z"/></clipPath><path d="M297.2 537.0Q295.2 535.6 296.3 532.3L299.9 521.8Q301.0 518.5 304.2 519.9L318.3 526.2Q321.5 527.6 319.8 530.4L316.4 536.2Q314.8 539.1 311.9 539.6L306.1 540.8Q303.2 541.4 301.2 539.9Z" fill="url(#wall)" stroke="#d9b952" stroke-width="0.7"/><g clip-path="url(#h19)"><path d="M297.2 537.0Q295.2 535.6 296.3 532.3L299.9 521.8Q301.0 518.5 304.2 519.9L318.3 526.2Q321.5 527.6 319.8 530.4L316.4 536.2Q314.8 539.1 311.9 539.6L306.1 540.8Q303.2 541.4 301.2 539.9Z" transform="translate(0,16)" fill="#626262"/></g><polygon points="715.0,348.3 639.2,405.8 631.3,408.3 707.1,350.8" fill="#fddd6b" /><polygon points="639.2,412.6 631.3,408.3 631.3,415.0 639.2,419.3" fill="#d6b75c" /><polygon points="639.2,405.8 815.0,500.0 815.0,513.5 639.2,419.3" fill="#d6b75c" /><polygon points="815.0,506.8 822.9,511.0 822.9,517.8 815.0,513.5" fill="#d6b75c" /><polygon points="815.0,500.0 888.3,435.8 888.3,442.6 815.0,506.8" fill="#b89f57" /><polygon points="815.0,506.8 888.3,442.6 896.2,446.8 822.9,511.0" fill="#ffe16d" /><polygon points="822.9,511.0 896.2,446.8 896.2,453.6 822.9,517.8" fill="#b89f57" /><polygon points="715.0,348.3 888.3,435.8 815.0,500.0 639.2,405.8" fill="#fddd6b" /><clipPath id="h20"><path d="M686.8 382.2Q683.8 380.3 686.6 378.1L704.8 363.2Q707.5 360.9 708.3 361.7L709.9 363.3Q710.8 364.1 710.9 367.6L711.7 385.5Q711.8 389.0 708.3 388.7L699.1 388.2Q695.6 388.0 692.7 386.0Z"/></clipPath><path d="M686.8 382.2Q683.8 380.3 686.6 378.1L704.8 363.2Q707.5 360.9 708.3 361.7L709.9 363.3Q710.8 364.1 710.9 367.6L711.7 385.5Q711.8 389.0 708.3 388.7L699.1 388.2Q695.6 388.0 692.7 386.0Z" fill="url(#wall)" stroke="#d9b952" stroke-width="0.7"/><g clip-path="url(#h20)"><path d="M686.8 382.2Q683.8 380.3 686.6 378.1L704.8 363.2Q707.5 360.9 708.3 361.7L709.9 363.3Q710.8 364.1 710.9 367.6L711.7 385.5Q711.8 389.0 708.3 388.7L699.1 388.2Q695.6 388.0 692.7 386.0Z" transform="translate(0,16)" fill="#626262"/></g><clipPath id="h21"><path d="M711.5 361.5Q711.1 358.0 713.2 357.2L717.5 355.6Q719.6 354.8 722.1 357.2L742.9 377.0Q745.4 379.5 745.4 381.3L745.3 385.1Q745.3 386.9 741.8 387.2L718.8 388.9Q715.3 389.1 714.8 385.6Z"/></clipPath><path d="M711.5 361.5Q711.1 358.0 713.2 357.2L717.5 355.6Q719.6 354.8 722.1 357.2L742.9 377.0Q745.4 379.5 745.4 381.3L745.3 385.1Q745.3 386.9 741.8 387.2L718.8 388.9Q715.3 389.1 714.8 385.6Z" fill="url(#wall)" stroke="#d9b952" stroke-width="0.7"/><g clip-path="url(#h21)"><path d="M711.5 361.5Q711.1 358.0 713.2 357.2L717.5 355.6Q719.6 354.8 722.1 357.2L742.9 377.0Q745.4 379.5 745.4 381.3L745.3 385.1Q745.3 386.9 741.8 387.2L718.8 388.9Q715.3 389.1 714.8 385.6Z" transform="translate(0,16)" fill="#626262"/></g><clipPath id="h22"><path d="M737.1 366.1Q735.2 363.1 738.3 364.7L763.3 377.6Q766.4 379.2 763.4 381.0L754.4 386.2Q751.3 388.0 749.6 385.5L746.3 380.6Q744.6 378.2 742.7 375.2Z"/></clipPath><path d="M737.1 366.1Q735.2 363.1 738.3 364.7L763.3 377.6Q766.4 379.2 763.4 381.0L754.4 386.2Q751.3 388.0 749.6 385.5L746.3 380.6Q744.6 378.2 742.7 375.2Z" fill="url(#wall)" stroke="#d9b952" stroke-width="0.7"/><g clip-path="url(#h22)"><path d="M737.1 366.1Q735.2 363.1 738.3 364.7L763.3 377.6Q766.4 379.2 763.4 381.0L754.4 386.2Q751.3 388.0 749.6 385.5L746.3 380.6Q744.6 378.2 742.7 375.2Z" transform="translate(0,16)" fill="#626262"/></g><clipPath id="h23"><path d="M756.9 389.8Q756.1 387.9 759.2 386.4L766.9 382.7Q770.1 381.2 773.2 382.7L790.5 390.7Q793.7 392.2 790.3 393.2L782.2 395.6Q778.9 396.6 775.4 396.4L762.7 395.7Q759.2 395.4 758.5 393.6Z"/></clipPath><path d="M756.9 389.8Q756.1 387.9 759.2 386.4L766.9 382.7Q770.1 381.2 773.2 382.7L790.5 390.7Q793.7 392.2 790.3 393.2L782.2 395.6Q778.9 396.6 775.4 396.4L762.7 395.7Q759.2 395.4 758.5 393.6Z" fill="url(#wall)" stroke="#d9b952" stroke-width="0.7"/><g clip-path="url(#h23)"><path d="M756.9 389.8Q756.1 387.9 759.2 386.4L766.9 382.7Q770.1 381.2 773.2 382.7L790.5 390.7Q793.7 392.2 790.3 393.2L782.2 395.6Q778.9 396.6 775.4 396.4L762.7 395.7Q759.2 395.4 758.5 393.6Z" transform="translate(0,16)" fill="#626262"/></g><clipPath id="h24"><path d="M655.1 401.1Q653.0 400.6 655.9 398.6L677.0 384.2Q679.9 382.3 679.7 383.9L679.2 387.1Q678.9 388.7 676.2 390.9L664.2 400.6Q661.5 402.8 659.4 402.3Z"/></clipPath><path d="M655.1 401.1Q653.0 400.6 655.9 398.6L677.0 384.2Q679.9 382.3 679.7 383.9L679.2 387.1Q678.9 388.7 676.2 390.9L664.2 400.6Q661.5 402.8 659.4 402.3Z" fill="url(#wall)" stroke="#d9b952" stroke-width="0.7"/><g clip-path="url(#h24)"><path d="M655.1 401.1Q653.0 400.6 655.9 398.6L677.0 384.2Q679.9 382.3 679.7 383.9L679.2 387.1Q678.9 388.7 676.2 390.9L664.2 400.6Q661.5 402.8 659.4 402.3Z" transform="translate(0,16)" fill="#626262"/></g><clipPath id="h25"><path d="M675.1 398.9Q671.6 398.3 674.4 396.2L680.4 391.7Q683.2 389.6 686.7 389.5L707.8 388.7Q711.3 388.6 711.8 391.5L712.9 397.5Q713.4 400.4 709.9 400.6L693.2 401.5Q689.7 401.7 686.2 401.0Z"/></clipPath><path d="M675.1 398.9Q671.6 398.3 674.4 396.2L680.4 391.7Q683.2 389.6 686.7 389.5L707.8 388.7Q711.3 388.6 711.8 391.5L712.9 397.5Q713.4 400.4 709.9 400.6L693.2 401.5Q689.7 401.7 686.2 401.0Z" fill="url(#wall)" stroke="#d9b952" stroke-width="0.7"/><g clip-path="url(#h25)"><path d="M675.1 398.9Q671.6 398.3 674.4 396.2L680.4 391.7Q683.2 389.6 686.7 389.5L707.8 388.7Q711.3 388.6 711.8 391.5L712.9 397.5Q713.4 400.4 709.9 400.6L693.2 401.5Q689.7 401.7 686.2 401.0Z" transform="translate(0,16)" fill="#626262"/></g><clipPath id="h26"><path d="M716.4 396.1Q715.9 394.0 719.3 393.6L747.9 390.1Q751.3 389.7 751.6 391.0L752.2 393.7Q752.4 395.1 749.0 395.8L721.4 401.8Q718.0 402.6 717.5 400.4Z"/></clipPath><path d="M716.4 396.1Q715.9 394.0 719.3 393.6L747.9 390.1Q751.3 389.7 751.6 391.0L752.2 393.7Q752.4 395.1 749.0 395.8L721.4 401.8Q718.0 402.6 717.5 400.4Z" fill="url(#wall)" stroke="#d9b952" stroke-width="0.7"/><g clip-path="url(#h26)"><path d="M716.4 396.1Q715.9 394.0 719.3 393.6L747.9 390.1Q751.3 389.7 751.6 391.0L752.2 393.7Q752.4 395.1 749.0 395.8L721.4 401.8Q718.0 402.6 717.5 400.4Z" transform="translate(0,16)" fill="#626262"/></g><clipPath id="h27"><path d="M657.0 410.1Q655.2 409.0 658.5 408.0L674.0 403.5Q677.3 402.5 680.8 402.7L710.3 404.6Q713.8 404.8 714.6 406.9L716.2 411.2Q717.0 413.3 713.5 413.9L696.1 417.1Q692.6 417.8 689.2 417.3L666.0 413.8Q662.5 413.3 660.7 412.2Z"/></clipPath><path d="M657.0 410.1Q655.2 409.0 658.5 408.0L674.0 403.5Q677.3 402.5 680.8 402.7L710.3 404.6Q713.8 404.8 714.6 406.9L716.2 411.2Q717.0 413.3 713.5 413.9L696.1 417.1Q692.6 417.8 689.2 417.3L666.0 413.8Q662.5 413.3 660.7 412.2Z" fill="url(#wall)" stroke="#d9b952" stroke-width="0.7"/><g clip-path="url(#h27)"><path d="M657.0 410.1Q655.2 409.0 658.5 408.0L674.0 403.5Q677.3 402.5 680.8 402.7L710.3 404.6Q713.8 404.8 714.6 406.9L716.2 411.2Q717.0 413.3 713.5 413.9L696.1 417.1Q692.6 417.8 689.2 417.3L666.0 413.8Q662.5 413.3 660.7 412.2Z" transform="translate(0,16)" fill="#626262"/></g><clipPath id="h28"><path d="M723.9 410.2Q721.5 407.7 724.8 406.4L749.2 397.1Q752.5 395.8 754.3 396.6L758.1 398.2Q760.0 399.0 759.8 402.5L759.2 419.2Q759.0 422.7 757.9 425.4L755.7 430.7Q754.6 433.4 751.4 432.3L744.9 430.2Q741.7 429.2 739.3 426.6Z"/></clipPath><path d="M723.9 410.2Q721.5 407.7 724.8 406.4L749.2 397.1Q752.5 395.8 754.3 396.6L758.1 398.2Q760.0 399.0 759.8 402.5L759.2 419.2Q759.0 422.7 757.9 425.4L755.7 430.7Q754.6 433.4 751.4 432.3L744.9 430.2Q741.7 429.2 739.3 426.6Z" fill="url(#wall)" stroke="#d9b952" stroke-width="0.7"/><g clip-path="url(#h28)"><path d="M723.9 410.2Q721.5 407.7 724.8 406.4L749.2 397.1Q752.5 395.8 754.3 396.6L758.1 398.2Q760.0 399.0 759.8 402.5L759.2 419.2Q759.0 422.7 757.9 425.4L755.7 430.7Q754.6 433.4 751.4 432.3L744.9 430.2Q741.7 429.2 739.3 426.6Z" transform="translate(0,16)" fill="#626262"/></g><clipPath id="h29"><path d="M762.9 405.0Q762.9 401.5 766.2 400.5L778.7 396.9Q782.1 396.0 785.6 396.3L800.0 397.9Q803.5 398.3 804.0 401.7L805.2 410.8Q805.7 414.3 802.6 416.0L789.5 423.4Q786.4 425.2 783.1 426.2L766.3 431.4Q762.9 432.4 762.9 428.9Z"/></clipPath><path d="M762.9 405.0Q762.9 401.5 766.2 400.5L778.7 396.9Q782.1 396.0 785.6 396.3L800.0 397.9Q803.5 398.3 804.0 401.7L805.2 410.8Q805.7 414.3 802.6 416.0L789.5 423.4Q786.4 425.2 783.1 426.2L766.3 431.4Q762.9 432.4 762.9 428.9Z" fill="url(#wall)" stroke="#d9b952" stroke-width="0.7"/><g clip-path="url(#h29)"><path d="M762.9 405.0Q762.9 401.5 766.2 400.5L778.7 396.9Q782.1 396.0 785.6 396.3L800.0 397.9Q803.5 398.3 804.0 401.7L805.2 410.8Q805.7 414.3 802.6 416.0L789.5 423.4Q786.4 425.2 783.1 426.2L766.3 431.4Q762.9 432.4 762.9 428.9Z" transform="translate(0,16)" fill="#626262"/></g><clipPath id="h30"><path d="M810.3 408.5Q810.0 405.3 811.9 404.8L815.6 403.7Q817.5 403.1 820.6 404.7L853.9 420.9Q857.0 422.4 855.2 423.8L851.5 426.5Q849.6 427.8 846.2 427.7L831.7 427.1Q828.2 427.0 825.1 425.4L814.2 419.8Q811.0 418.2 810.8 415.0Z"/></clipPath><path d="M810.3 408.5Q810.0 405.3 811.9 404.8L815.6 403.7Q817.5 403.1 820.6 404.7L853.9 420.9Q857.0 422.4 855.2 423.8L851.5 426.5Q849.6 427.8 846.2 427.7L831.7 427.1Q828.2 427.0 825.1 425.4L814.2 419.8Q811.0 418.2 810.8 415.0Z" fill="url(#wall)" stroke="#d9b952" stroke-width="0.7"/><g clip-path="url(#h30)"><path d="M810.3 408.5Q810.0 405.3 811.9 404.8L815.6 403.7Q817.5 403.1 820.6 404.7L853.9 420.9Q857.0 422.4 855.2 423.8L851.5 426.5Q849.6 427.8 846.2 427.7L831.7 427.1Q828.2 427.0 825.1 425.4L814.2 419.8Q811.0 418.2 810.8 415.0Z" transform="translate(0,16)" fill="#626262"/></g><clipPath id="h31"><path d="M693.3 427.5Q690.2 425.8 693.4 424.4L706.0 418.6Q709.2 417.2 712.7 417.7L720.8 418.7Q724.3 419.2 726.9 421.5L738.8 432.1Q741.4 434.4 741.2 436.0L740.6 439.2Q740.4 440.8 737.4 442.2L731.5 444.9Q728.6 446.3 725.5 444.6Z"/></clipPath><path d="M693.3 427.5Q690.2 425.8 693.4 424.4L706.0 418.6Q709.2 417.2 712.7 417.7L720.8 418.7Q724.3 419.2 726.9 421.5L738.8 432.1Q741.4 434.4 741.2 436.0L740.6 439.2Q740.4 440.8 737.4 442.2L731.5 444.9Q728.6 446.3 725.5 444.6Z" fill="url(#wall)" stroke="#d9b952" stroke-width="0.7"/><g clip-path="url(#h31)"><path d="M693.3 427.5Q690.2 425.8 693.4 424.4L706.0 418.6Q709.2 417.2 712.7 417.7L720.8 418.7Q724.3 419.2 726.9 421.5L738.8 432.1Q741.4 434.4 741.2 436.0L740.6 439.2Q740.4 440.8 737.4 442.2L731.5 444.9Q728.6 446.3 725.5 444.6Z" transform="translate(0,16)" fill="#626262"/></g><clipPath id="h32"><path d="M741.2 449.3Q738.0 447.8 740.9 445.9L749.9 440.1Q752.8 438.2 756.3 438.1L764.2 438.1Q767.7 438.0 770.6 439.9L800.0 458.7Q802.9 460.6 802.9 462.7L802.9 467.0Q802.9 469.1 799.4 469.6L792.6 470.8Q789.1 471.3 785.9 469.8Z"/></clipPath><path d="M741.2 449.3Q738.0 447.8 740.9 445.9L749.9 440.1Q752.8 438.2 756.3 438.1L764.2 438.1Q767.7 438.0 770.6 439.9L800.0 458.7Q802.9 460.6 802.9 462.7L802.9 467.0Q802.9 469.1 799.4 469.6L792.6 470.8Q789.1 471.3 785.9 469.8Z" fill="url(#wall)" stroke="#d9b952" stroke-width="0.7"/><g clip-path="url(#h32)"><path d="M741.2 449.3Q738.0 447.8 740.9 445.9L749.9 440.1Q752.8 438.2 756.3 438.1L764.2 438.1Q767.7 438.0 770.6 439.9L800.0 458.7Q802.9 460.6 802.9 462.7L802.9 467.0Q802.9 469.1 799.4 469.6L792.6 470.8Q789.1 471.3 785.9 469.8Z" transform="translate(0,16)" fill="#626262"/></g><clipPath id="h33"><path d="M781.1 437.6Q778.1 435.9 781.3 434.6L798.1 427.6Q801.3 426.2 804.8 426.6L823.7 429.0Q827.1 429.4 829.3 431.5L833.5 435.9Q835.6 438.0 835.4 441.5L834.8 448.5Q834.5 451.9 831.2 452.9L819.7 456.4Q816.3 457.4 813.3 455.7Z"/></clipPath><path d="M781.1 437.6Q778.1 435.9 781.3 434.6L798.1 427.6Q801.3 426.2 804.8 426.6L823.7 429.0Q827.1 429.4 829.3 431.5L833.5 435.9Q835.6 438.0 835.4 441.5L834.8 448.5Q834.5 451.9 831.2 452.9L819.7 456.4Q816.3 457.4 813.3 455.7Z" fill="url(#wall)" stroke="#d9b952" stroke-width="0.7"/><g clip-path="url(#h33)"><path d="M781.1 437.6Q778.1 435.9 781.3 434.6L798.1 427.6Q801.3 426.2 804.8 426.6L823.7 429.0Q827.1 429.4 829.3 431.5L833.5 435.9Q835.6 438.0 835.4 441.5L834.8 448.5Q834.5 451.9 831.2 452.9L819.7 456.4Q816.3 457.4 813.3 455.7Z" transform="translate(0,16)" fill="#626262"/></g><clipPath id="h34"><path d="M840.7 437.0Q840.3 433.5 843.6 432.6L853.0 430.0Q856.4 429.1 859.2 431.2L866.6 436.8Q869.4 438.9 869.4 440.5L869.4 443.7Q869.4 445.4 866.8 447.7L859.0 454.9Q856.4 457.2 853.1 456.0L845.6 453.1Q842.4 451.8 842.0 448.3Z"/></clipPath><path d="M840.7 437.0Q840.3 433.5 843.6 432.6L853.0 430.0Q856.4 429.1 859.2 431.2L866.6 436.8Q869.4 438.9 869.4 440.5L869.4 443.7Q869.4 445.4 866.8 447.7L859.0 454.9Q856.4 457.2 853.1 456.0L845.6 453.1Q842.4 451.8 842.0 448.3Z" fill="url(#wall)" stroke="#d9b952" stroke-width="0.7"/><g clip-path="url(#h34)"><path d="M840.7 437.0Q840.3 433.5 843.6 432.6L853.0 430.0Q856.4 429.1 859.2 431.2L866.6 436.8Q869.4 438.9 869.4 440.5L869.4 443.7Q869.4 445.4 866.8 447.7L859.0 454.9Q856.4 457.2 853.1 456.0L845.6 453.1Q842.4 451.8 842.0 448.3Z" transform="translate(0,16)" fill="#626262"/></g><clipPath id="h35"><path d="M861.9 429.0Q859.5 426.5 862.7 427.9L878.1 434.8Q881.2 436.2 879.3 437.6L875.5 440.4Q873.6 441.8 872.5 440.5L870.1 437.8Q868.9 436.4 866.6 433.9Z"/></clipPath><path d="M861.9 429.0Q859.5 426.5 862.7 427.9L878.1 434.8Q881.2 436.2 879.3 437.6L875.5 440.4Q873.6 441.8 872.5 440.5L870.1 437.8Q868.9 436.4 866.6 433.9Z" fill="url(#wall)" stroke="#d9b952" stroke-width="0.7"/><g clip-path="url(#h35)"><path d="M861.9 429.0Q859.5 426.5 862.7 427.9L878.1 434.8Q881.2 436.2 879.3 437.6L875.5 440.4Q873.6 441.8 872.5 440.5L870.1 437.8Q868.9 436.4 866.6 433.9Z" transform="translate(0,16)" fill="#626262"/></g><clipPath id="h36"><path d="M808.9 467.2Q807.9 463.8 811.3 462.9L835.7 456.1Q839.0 455.2 841.4 456.3L846.2 458.5Q848.6 459.6 847.3 461.7L844.7 466.0Q843.4 468.1 840.7 470.3L822.4 485.2Q819.7 487.4 818.1 485.8L814.9 482.6Q813.2 481.0 812.2 477.7Z"/></clipPath><path d="M808.9 467.2Q807.9 463.8 811.3 462.9L835.7 456.1Q839.0 455.2 841.4 456.3L846.2 458.5Q848.6 459.6 847.3 461.7L844.7 466.0Q843.4 468.1 840.7 470.3L822.4 485.2Q819.7 487.4 818.1 485.8L814.9 482.6Q813.2 481.0 812.2 477.7Z" fill="url(#wall)" stroke="#d9b952" stroke-width="0.7"/><g clip-path="url(#h36)"><path d="M808.9 467.2Q807.9 463.8 811.3 462.9L835.7 456.1Q839.0 455.2 841.4 456.3L846.2 458.5Q848.6 459.6 847.3 461.7L844.7 466.0Q843.4 468.1 840.7 470.3L822.4 485.2Q819.7 487.4 818.1 485.8L814.9 482.6Q813.2 481.0 812.2 477.7Z" transform="translate(0,16)" fill="#626262"/></g><clipPath id="h37"><path d="M782.9 476.5Q779.9 474.8 783.3 474.3L801.1 471.9Q804.6 471.4 806.2 474.5L811.5 484.6Q813.2 487.7 811.6 488.3L808.3 489.4Q806.7 490.0 803.7 488.3Z"/></clipPath><path d="M782.9 476.5Q779.9 474.8 783.3 474.3L801.1 471.9Q804.6 471.4 806.2 474.5L811.5 484.6Q813.2 487.7 811.6 488.3L808.3 489.4Q806.7 490.0 803.7 488.3Z" fill="url(#wall)" stroke="#d9b952" stroke-width="0.7"/><g clip-path="url(#h37)"><path d="M782.9 476.5Q779.9 474.8 783.3 474.3L801.1 471.9Q804.6 471.4 806.2 474.5L811.5 484.6Q813.2 487.7 811.6 488.3L808.3 489.4Q806.7 490.0 803.7 488.3Z" transform="translate(0,16)" fill="#626262"/></g><polygon points="630.8,414.2 550.0,476.7 542.2,478.9 623.0,416.4" fill="#fddd6b" /><polygon points="550.0,483.4 542.2,478.9 542.2,485.7 550.0,490.2" fill="#d6b75c" /><polygon points="550.0,476.7 728.3,580.8 728.3,594.3 550.0,490.2" fill="#d6b75c" /><polygon points="728.3,587.5 736.1,592.1 736.1,598.8 728.3,594.3" fill="#d6b75c" /><polygon points="728.3,580.8 808.3,512.5 808.3,519.2 728.3,587.5" fill="#b89f57" /><polygon points="728.3,587.5 808.3,519.2 816.1,523.8 736.1,592.1" fill="#ffe16d" /><polygon points="736.1,592.1 816.1,523.8 816.1,530.5 736.1,598.8" fill="#b89f57" /><polygon points="630.8,414.2 808.3,512.5 728.3,580.8 550.0,476.7" fill="#fddd6b" /><clipPath id="h38"><path d="M603.3 445.3Q599.8 445.7 602.7 443.7L624.9 428.3Q627.8 426.3 628.4 427.1L629.5 428.7Q630.0 429.5 627.6 432.1L619.3 441.2Q616.9 443.8 613.5 444.2Z"/></clipPath><path d="M603.3 445.3Q599.8 445.7 602.7 443.7L624.9 428.3Q627.8 426.3 628.4 427.1L629.5 428.7Q630.0 429.5 627.6 432.1L619.3 441.2Q616.9 443.8 613.5 444.2Z" fill="url(#wall)" stroke="#d9b952" stroke-width="0.7"/><g clip-path="url(#h38)"><path d="M603.3 445.3Q599.8 445.7 602.7 443.7L624.9 428.3Q627.8 426.3 628.4 427.1L629.5 428.7Q630.0 429.5 627.6 432.1L619.3 441.2Q616.9 443.8 613.5 444.2Z" transform="translate(0,16)" fill="#626262"/></g><clipPath id="h39"><path d="M616.1 462.1Q615.3 460.5 615.6 457.2L616.1 450.7Q616.4 447.4 619.1 445.1L624.7 440.1Q627.3 437.8 628.6 441.1L633.7 453.9Q635.0 457.2 635.5 459.1L636.5 462.9Q637.0 464.7 633.5 465.2L622.1 466.5Q618.6 466.9 617.8 465.3Z"/></clipPath><path d="M616.1 462.1Q615.3 460.5 615.6 457.2L616.1 450.7Q616.4 447.4 619.1 445.1L624.7 440.1Q627.3 437.8 628.6 441.1L633.7 453.9Q635.0 457.2 635.5 459.1L636.5 462.9Q637.0 464.7 633.5 465.2L622.1 466.5Q618.6 466.9 617.8 465.3Z" fill="url(#wall)" stroke="#d9b952" stroke-width="0.7"/><g clip-path="url(#h39)"><path d="M616.1 462.1Q615.3 460.5 615.6 457.2L616.1 450.7Q616.4 447.4 619.1 445.1L624.7 440.1Q627.3 437.8 628.6 441.1L633.7 453.9Q635.0 457.2 635.5 459.1L636.5 462.9Q637.0 464.7 633.5 465.2L622.1 466.5Q618.6 466.9 617.8 465.3Z" transform="translate(0,16)" fill="#626262"/></g><clipPath id="h40"><path d="M633.0 432.3Q632.3 428.9 633.9 428.6L637.1 428.0Q638.7 427.8 641.0 430.4L654.9 446.6Q657.1 449.3 657.1 452.8L657.0 460.7Q657.0 464.2 653.5 464.0L642.2 463.4Q638.7 463.2 638.1 459.8Z"/></clipPath><path d="M633.0 432.3Q632.3 428.9 633.9 428.6L637.1 428.0Q638.7 427.8 641.0 430.4L654.9 446.6Q657.1 449.3 657.1 452.8L657.0 460.7Q657.0 464.2 653.5 464.0L642.2 463.4Q638.7 463.2 638.1 459.8Z" fill="url(#wall)" stroke="#d9b952" stroke-width="0.7"/><g clip-path="url(#h40)"><path d="M633.0 432.3Q632.3 428.9 633.9 428.6L637.1 428.0Q638.7 427.8 641.0 430.4L654.9 446.6Q657.1 449.3 657.1 452.8L657.0 460.7Q657.0 464.2 653.5 464.0L642.2 463.4Q638.7 463.2 638.1 459.8Z" transform="translate(0,16)" fill="#626262"/></g><clipPath id="h41"><path d="M642.5 429.0Q640.2 426.4 642.8 427.1L648.2 428.6Q650.8 429.4 653.7 431.4L664.3 438.5Q667.2 440.4 664.7 441.8L659.9 444.5Q657.5 445.9 655.1 443.3Z"/></clipPath><path d="M642.5 429.0Q640.2 426.4 642.8 427.1L648.2 428.6Q650.8 429.4 653.7 431.4L664.3 438.5Q667.2 440.4 664.7 441.8L659.9 444.5Q657.5 445.9 655.1 443.3Z" fill="url(#wall)" stroke="#d9b952" stroke-width="0.7"/><g clip-path="url(#h41)"><path d="M642.5 429.0Q640.2 426.4 642.8 427.1L648.2 428.6Q650.8 429.4 653.7 431.4L664.3 438.5Q667.2 440.4 664.7 441.8L659.9 444.5Q657.5 445.9 655.1 443.3Z" transform="translate(0,16)" fill="#626262"/></g><clipPath id="h42"><path d="M574.8 468.4Q571.3 468.4 574.5 466.9L606.7 451.6Q609.8 450.1 610.4 452.6L611.5 457.4Q612.1 459.8 611.8 462.0L611.2 466.3Q611.0 468.5 607.5 468.5L598.1 468.6Q594.6 468.6 591.1 468.6Z"/></clipPath><path d="M574.8 468.4Q571.3 468.4 574.5 466.9L606.7 451.6Q609.8 450.1 610.4 452.6L611.5 457.4Q612.1 459.8 611.8 462.0L611.2 466.3Q611.0 468.5 607.5 468.5L598.1 468.6Q594.6 468.6 591.1 468.6Z" fill="url(#wall)" stroke="#d9b952" stroke-width="0.7"/><g clip-path="url(#h42)"><path d="M574.8 468.4Q571.3 468.4 574.5 466.9L606.7 451.6Q609.8 450.1 610.4 452.6L611.5 457.4Q612.1 459.8 611.8 462.0L611.2 466.3Q611.0 468.5 607.5 468.5L598.1 468.6Q594.6 468.6 591.1 468.6Z" transform="translate(0,16)" fill="#626262"/></g><clipPath id="h43"><path d="M663.5 456.2Q662.7 453.5 664.6 451.6L668.3 447.9Q670.2 446.0 673.3 447.5L707.6 463.7Q710.8 465.2 710.5 466.6L710.0 469.2Q709.7 470.6 706.8 472.2L701.0 475.5Q698.0 477.1 694.8 475.8L669.1 465.5Q665.8 464.2 665.0 461.5Z"/></clipPath><path d="M663.5 456.2Q662.7 453.5 664.6 451.6L668.3 447.9Q670.2 446.0 673.3 447.5L707.6 463.7Q710.8 465.2 710.5 466.6L710.0 469.2Q709.7 470.6 706.8 472.2L701.0 475.5Q698.0 477.1 694.8 475.8L669.1 465.5Q665.8 464.2 665.0 461.5Z" fill="url(#wall)" stroke="#d9b952" stroke-width="0.7"/><g clip-path="url(#h43)"><path d="M663.5 456.2Q662.7 453.5 664.6 451.6L668.3 447.9Q670.2 446.0 673.3 447.5L707.6 463.7Q710.8 465.2 710.5 466.6L710.0 469.2Q709.7 470.6 706.8 472.2L701.0 475.5Q698.0 477.1 694.8 475.8L669.1 465.5Q665.8 464.2 665.0 461.5Z" transform="translate(0,16)" fill="#626262"/></g><clipPath id="h44"><path d="M589.0 487.1Q585.6 486.3 588.7 484.7L612.6 471.8Q615.6 470.2 616.5 471.5L618.1 474.2Q618.9 475.5 618.7 479.0L618.1 487.3Q617.8 490.8 614.6 490.8L608.0 490.8Q604.8 490.9 601.3 490.1Z"/></clipPath><path d="M589.0 487.1Q585.6 486.3 588.7 484.7L612.6 471.8Q615.6 470.2 616.5 471.5L618.1 474.2Q618.9 475.5 618.7 479.0L618.1 487.3Q617.8 490.8 614.6 490.8L608.0 490.8Q604.8 490.9 601.3 490.1Z" fill="url(#wall)" stroke="#d9b952" stroke-width="0.7"/><g clip-path="url(#h44)"><path d="M589.0 487.1Q585.6 486.3 588.7 484.7L612.6 471.8Q615.6 470.2 616.5 471.5L618.1 474.2Q618.9 475.5 618.7 479.0L618.1 487.3Q617.8 490.8 614.6 490.8L608.0 490.8Q604.8 490.9 601.3 490.1Z" transform="translate(0,16)" fill="#626262"/></g><clipPath id="h45"><path d="M623.7 473.7Q623.5 470.2 627.0 470.0L638.3 469.3Q641.8 469.1 641.0 472.5L637.4 486.4Q636.6 489.7 635.7 490.8L634.1 493.0Q633.2 494.0 631.1 493.7L626.7 493.2Q624.5 492.9 624.4 489.4Z"/></clipPath><path d="M623.7 473.7Q623.5 470.2 627.0 470.0L638.3 469.3Q641.8 469.1 641.0 472.5L637.4 486.4Q636.6 489.7 635.7 490.8L634.1 493.0Q633.2 494.0 631.1 493.7L626.7 493.2Q624.5 492.9 624.4 489.4Z" fill="url(#wall)" stroke="#d9b952" stroke-width="0.7"/><g clip-path="url(#h45)"><path d="M623.7 473.7Q623.5 470.2 627.0 470.0L638.3 469.3Q641.8 469.1 641.0 472.5L637.4 486.4Q636.6 489.7 635.7 490.8L634.1 493.0Q633.2 494.0 631.1 493.7L626.7 493.2Q624.5 492.9 624.4 489.4Z" transform="translate(0,16)" fill="#626262"/></g><clipPath id="h46"><path d="M639.1 495.5Q637.5 494.7 638.8 491.5L645.7 474.5Q647.0 471.2 649.4 470.9L654.2 470.3Q656.6 470.0 660.0 471.1L691.7 480.9Q695.1 481.9 695.1 483.3L695.1 485.9Q695.1 487.3 691.6 487.8L677.4 490.0Q674.0 490.6 670.6 491.4L647.3 497.1Q643.9 498.0 642.3 497.2Z"/></clipPath><path d="M639.1 495.5Q637.5 494.7 638.8 491.5L645.7 474.5Q647.0 471.2 649.4 470.9L654.2 470.3Q656.6 470.0 660.0 471.1L691.7 480.9Q695.1 481.9 695.1 483.3L695.1 485.9Q695.1 487.3 691.6 487.8L677.4 490.0Q674.0 490.6 670.6 491.4L647.3 497.1Q643.9 498.0 642.3 497.2Z" fill="url(#wall)" stroke="#d9b952" stroke-width="0.7"/><g clip-path="url(#h46)"><path d="M639.1 495.5Q637.5 494.7 638.8 491.5L645.7 474.5Q647.0 471.2 649.4 470.9L654.2 470.3Q656.6 470.0 660.0 471.1L691.7 480.9Q695.1 481.9 695.1 483.3L695.1 485.9Q695.1 487.3 691.6 487.8L677.4 490.0Q674.0 490.6 670.6 491.4L647.3 497.1Q643.9 498.0 642.3 497.2Z" transform="translate(0,16)" fill="#626262"/></g><clipPath id="h47"><path d="M705.0 488.2Q703.4 485.8 705.8 483.2L713.8 474.4Q716.2 471.9 719.6 472.6L727.7 474.2Q731.1 474.9 734.0 476.9L756.0 492.3Q758.9 494.3 759.1 497.8L759.7 505.7Q759.9 509.2 758.6 509.5L755.9 510.0Q754.6 510.3 751.3 509.2L713.1 496.5Q709.7 495.4 708.2 493.0Z"/></clipPath><path d="M705.0 488.2Q703.4 485.8 705.8 483.2L713.8 474.4Q716.2 471.9 719.6 472.6L727.7 474.2Q731.1 474.9 734.0 476.9L756.0 492.3Q758.9 494.3 759.1 497.8L759.7 505.7Q759.9 509.2 758.6 509.5L755.9 510.0Q754.6 510.3 751.3 509.2L713.1 496.5Q709.7 495.4 708.2 493.0Z" fill="url(#wall)" stroke="#d9b952" stroke-width="0.7"/><g clip-path="url(#h47)"><path d="M705.0 488.2Q703.4 485.8 705.8 483.2L713.8 474.4Q716.2 471.9 719.6 472.6L727.7 474.2Q731.1 474.9 734.0 476.9L756.0 492.3Q758.9 494.3 759.1 497.8L759.7 505.7Q759.9 509.2 758.6 509.5L755.9 510.0Q754.6 510.3 751.3 509.2L713.1 496.5Q709.7 495.4 708.2 493.0Z" transform="translate(0,16)" fill="#626262"/></g><clipPath id="h48"><path d="M618.8 510.1Q616.0 508.0 618.6 505.6L624.1 500.5Q626.7 498.2 630.0 499.0L636.5 500.6Q639.8 501.4 639.8 504.9L639.7 517.5Q639.7 521.0 639.2 521.8L638.1 523.4Q637.5 524.2 634.8 522.1Z"/></clipPath><path d="M618.8 510.1Q616.0 508.0 618.6 505.6L624.1 500.5Q626.7 498.2 630.0 499.0L636.5 500.6Q639.8 501.4 639.8 504.9L639.7 517.5Q639.7 521.0 639.2 521.8L638.1 523.4Q637.5 524.2 634.8 522.1Z" fill="url(#wall)" stroke="#d9b952" stroke-width="0.7"/><g clip-path="url(#h48)"><path d="M618.8 510.1Q616.0 508.0 618.6 505.6L624.1 500.5Q626.7 498.2 630.0 499.0L636.5 500.6Q639.8 501.4 639.8 504.9L639.7 517.5Q639.7 521.0 639.2 521.8L638.1 523.4Q637.5 524.2 634.8 522.1Z" transform="translate(0,16)" fill="#626262"/></g><clipPath id="h49"><path d="M646.3 524.8Q643.4 522.9 643.4 519.4L643.4 507.2Q643.4 503.7 646.8 502.8L686.9 492.8Q690.3 491.9 692.2 492.7L695.9 494.4Q697.7 495.2 697.3 498.6L696.2 506.6Q695.7 510.1 693.3 512.7L686.3 520.4Q684.0 523.0 680.6 524.0L659.5 530.4Q656.1 531.4 653.2 529.5Z"/></clipPath><path d="M646.3 524.8Q643.4 522.9 643.4 519.4L643.4 507.2Q643.4 503.7 646.8 502.8L686.9 492.8Q690.3 491.9 692.2 492.7L695.9 494.4Q697.7 495.2 697.3 498.6L696.2 506.6Q695.7 510.1 693.3 512.7L686.3 520.4Q684.0 523.0 680.6 524.0L659.5 530.4Q656.1 531.4 653.2 529.5Z" fill="url(#wall)" stroke="#d9b952" stroke-width="0.7"/><g clip-path="url(#h49)"><path d="M646.3 524.8Q643.4 522.9 643.4 519.4L643.4 507.2Q643.4 503.7 646.8 502.8L686.9 492.8Q690.3 491.9 692.2 492.7L695.9 494.4Q697.7 495.2 697.3 498.6L696.2 506.6Q695.7 510.1 693.3 512.7L686.3 520.4Q684.0 523.0 680.6 524.0L659.5 530.4Q656.1 531.4 653.2 529.5Z" transform="translate(0,16)" fill="#626262"/></g><clipPath id="h50"><path d="M695.2 527.7Q692.7 525.3 694.1 522.2L700.8 508.2Q702.2 505.0 705.5 504.5L711.9 503.4Q715.1 502.8 718.3 504.3L739.7 514.2Q742.9 515.7 743.3 519.2L744.5 529.3Q744.9 532.8 741.7 534.0L724.8 540.2Q721.5 541.5 718.2 540.4L707.7 537.1Q704.3 536.1 701.8 533.7Z"/></clipPath><path d="M695.2 527.7Q692.7 525.3 694.1 522.2L700.8 508.2Q702.2 505.0 705.5 504.5L711.9 503.4Q715.1 502.8 718.3 504.3L739.7 514.2Q742.9 515.7 743.3 519.2L744.5 529.3Q744.9 532.8 741.7 534.0L724.8 540.2Q721.5 541.5 718.2 540.4L707.7 537.1Q704.3 536.1 701.8 533.7Z" fill="url(#wall)" stroke="#d9b952" stroke-width="0.7"/><g clip-path="url(#h50)"><path d="M695.2 527.7Q692.7 525.3 694.1 522.2L700.8 508.2Q702.2 505.0 705.5 504.5L711.9 503.4Q715.1 502.8 718.3 504.3L739.7 514.2Q742.9 515.7 743.3 519.2L744.5 529.3Q744.9 532.8 741.7 534.0L724.8 540.2Q721.5 541.5 718.2 540.4L707.7 537.1Q704.3 536.1 701.8 533.7Z" transform="translate(0,16)" fill="#626262"/></g><clipPath id="h51"><path d="M750.5 535.2Q748.0 532.7 748.5 529.3L749.6 522.2Q750.1 518.8 753.5 518.0L766.0 515.1Q769.5 514.3 772.9 514.5L786.3 515.4Q789.7 515.6 789.8 516.7L789.8 518.8Q789.8 519.9 787.2 522.2L763.5 543.2Q760.9 545.6 758.4 543.1Z"/></clipPath><path d="M750.5 535.2Q748.0 532.7 748.5 529.3L749.6 522.2Q750.1 518.8 753.5 518.0L766.0 515.1Q769.5 514.3 772.9 514.5L786.3 515.4Q789.7 515.6 789.8 516.7L789.8 518.8Q789.8 519.9 787.2 522.2L763.5 543.2Q760.9 545.6 758.4 543.1Z" fill="url(#wall)" stroke="#d9b952" stroke-width="0.7"/><g clip-path="url(#h51)"><path d="M750.5 535.2Q748.0 532.7 748.5 529.3L749.6 522.2Q750.1 518.8 753.5 518.0L766.0 515.1Q769.5 514.3 772.9 514.5L786.3 515.4Q789.7 515.6 789.8 516.7L789.8 518.8Q789.8 519.9 787.2 522.2L763.5 543.2Q760.9 545.6 758.4 543.1Z" transform="translate(0,16)" fill="#626262"/></g><clipPath id="h52"><path d="M762.9 496.2Q762.4 493.5 764.5 494.0L768.7 495.0Q770.9 495.5 774.0 497.1L788.4 504.8Q791.5 506.4 791.2 507.8L790.6 510.5Q790.4 511.8 787.0 510.8L767.8 505.3Q764.4 504.3 763.9 501.6Z"/></clipPath><path d="M762.9 496.2Q762.4 493.5 764.5 494.0L768.7 495.0Q770.9 495.5 774.0 497.1L788.4 504.8Q791.5 506.4 791.2 507.8L790.6 510.5Q790.4 511.8 787.0 510.8L767.8 505.3Q764.4 504.3 763.9 501.6Z" fill="url(#wall)" stroke="#d9b952" stroke-width="0.7"/><g clip-path="url(#h52)"><path d="M762.9 496.2Q762.4 493.5 764.5 494.0L768.7 495.0Q770.9 495.5 774.0 497.1L788.4 504.8Q791.5 506.4 791.2 507.8L790.6 510.5Q790.4 511.8 787.0 510.8L767.8 505.3Q764.4 504.3 763.9 501.6Z" transform="translate(0,16)" fill="#626262"/></g><clipPath id="h53"><path d="M662.2 536.8Q659.4 534.7 662.8 533.8L681.6 529.0Q685.0 528.1 687.9 530.0L697.2 535.9Q700.1 537.8 701.7 540.5L704.9 545.9Q706.5 548.6 705.9 551.5L704.8 557.4Q704.2 560.3 701.1 558.8L678.4 548.0Q675.2 546.5 672.4 544.4Z"/></clipPath><path d="M662.2 536.8Q659.4 534.7 662.8 533.8L681.6 529.0Q685.0 528.1 687.9 530.0L697.2 535.9Q700.1 537.8 701.7 540.5L704.9 545.9Q706.5 548.6 705.9 551.5L704.8 557.4Q704.2 560.3 701.1 558.8L678.4 548.0Q675.2 546.5 672.4 544.4Z" fill="url(#wall)" stroke="#d9b952" stroke-width="0.7"/><g clip-path="url(#h53)"><path d="M662.2 536.8Q659.4 534.7 662.8 533.8L681.6 529.0Q685.0 528.1 687.9 530.0L697.2 535.9Q700.1 537.8 701.7 540.5L704.9 545.9Q706.5 548.6 705.9 551.5L704.8 557.4Q704.2 560.3 701.1 558.8L678.4 548.0Q675.2 546.5 672.4 544.4Z" transform="translate(0,16)" fill="#626262"/></g><clipPath id="h54"><path d="M712.0 560.1Q709.8 558.5 710.4 555.8L711.4 550.5Q712.0 547.8 715.4 547.1L734.3 543.0Q737.8 542.3 741.1 543.5L749.4 546.6Q752.7 547.8 752.9 549.1L753.5 551.8Q753.8 553.1 750.8 555.1L738.5 563.2Q735.6 565.1 732.1 565.1L721.8 565.0Q718.3 565.0 716.2 563.4Z"/></clipPath><path d="M712.0 560.1Q709.8 558.5 710.4 555.8L711.4 550.5Q712.0 547.8 715.4 547.1L734.3 543.0Q737.8 542.3 741.1 543.5L749.4 546.6Q752.7 547.8 752.9 549.1L753.5 551.8Q753.8 553.1 750.8 555.1L738.5 563.2Q735.6 565.1 732.1 565.1L721.8 565.0Q718.3 565.0 716.2 563.4Z" fill="url(#wall)" stroke="#d9b952" stroke-width="0.7"/><g clip-path="url(#h54)"><path d="M712.0 560.1Q709.8 558.5 710.4 555.8L711.4 550.5Q712.0 547.8 715.4 547.1L734.3 543.0Q737.8 542.3 741.1 543.5L749.4 546.6Q752.7 547.8 752.9 549.1L753.5 551.8Q753.8 553.1 750.8 555.1L738.5 563.2Q735.6 565.1 732.1 565.1L721.8 565.0Q718.3 565.0 716.2 563.4Z" transform="translate(0,16)" fill="#626262"/></g><clipPath id="h55"><path d="M708.2 565.4Q705.0 563.9 708.5 564.5L729.7 568.6Q733.2 569.2 732.9 570.1L732.3 571.7Q732.1 572.5 729.3 572.3L723.7 571.9Q720.9 571.7 717.8 570.1Z"/></clipPath><path d="M708.2 565.4Q705.0 563.9 708.5 564.5L729.7 568.6Q733.2 569.2 732.9 570.1L732.3 571.7Q732.1 572.5 729.3 572.3L723.7 571.9Q720.9 571.7 717.8 570.1Z" fill="url(#wall)" stroke="#d9b952" stroke-width="0.7"/><g clip-path="url(#h55)"><path d="M708.2 565.4Q705.0 563.9 708.5 564.5L729.7 568.6Q733.2 569.2 732.9 570.1L732.3 571.7Q732.1 572.5 729.3 572.3L723.7 571.9Q720.9 571.7 717.8 570.1Z" transform="translate(0,16)" fill="#626262"/></g><polygon points="356.7,349.2 541.7,452.5 541.7,467.5 356.7,364.2" fill="#dcb95e" /><polygon points="541.7,452.5 702.5,334.2 702.5,349.2 541.7,467.5" fill="#c8a858" /><polygon points="520.0,241.3 702.5,334.2 541.7,452.5 356.7,349.2" fill="#fddd6b" /><clipPath id="h56"><path d="M511.1 273.3Q510.0 272.3 512.9 270.2L519.9 265.1Q522.8 263.1 525.9 264.6L550.1 276.0Q553.3 277.4 551.9 279.4L549.0 283.2Q547.6 285.1 544.5 285.1L538.4 285.2Q535.3 285.3 532.1 283.9L517.4 277.8Q514.2 276.5 513.1 275.4Z"/></clipPath><path d="M511.1 273.3Q510.0 272.3 512.9 270.2L519.9 265.1Q522.8 263.1 525.9 264.6L550.1 276.0Q553.3 277.4 551.9 279.4L549.0 283.2Q547.6 285.1 544.5 285.1L538.4 285.2Q535.3 285.3 532.1 283.9L517.4 277.8Q514.2 276.5 513.1 275.4Z" fill="url(#wall)" stroke="#d9b952" stroke-width="0.7"/><g clip-path="url(#h56)"><path d="M511.1 273.3Q510.0 272.3 512.9 270.2L519.9 265.1Q522.8 263.1 525.9 264.6L550.1 276.0Q553.3 277.4 551.9 279.4L549.0 283.2Q547.6 285.1 544.5 285.1L538.4 285.2Q535.3 285.3 532.1 283.9L517.4 277.8Q514.2 276.5 513.1 275.4Z" transform="translate(0,15)" fill="#626262"/></g><clipPath id="h57"><path d="M479.2 294.2Q476.3 292.9 479.2 291.1L502.4 276.6Q505.3 274.7 507.2 276.4L511.0 279.8Q512.9 281.5 510.0 283.4L491.0 295.9Q488.0 297.8 485.1 296.6Z"/></clipPath><path d="M479.2 294.2Q476.3 292.9 479.2 291.1L502.4 276.6Q505.3 274.7 507.2 276.4L511.0 279.8Q512.9 281.5 510.0 283.4L491.0 295.9Q488.0 297.8 485.1 296.6Z" fill="url(#wall)" stroke="#d9b952" stroke-width="0.7"/><g clip-path="url(#h57)"><path d="M479.2 294.2Q476.3 292.9 479.2 291.1L502.4 276.6Q505.3 274.7 507.2 276.4L511.0 279.8Q512.9 281.5 510.0 283.4L491.0 295.9Q488.0 297.8 485.1 296.6Z" transform="translate(0,15)" fill="#626262"/></g><clipPath id="h58"><path d="M492.0 303.2Q491.1 301.5 494.2 299.8L517.3 286.6Q520.3 284.9 523.7 285.9L539.6 290.5Q542.9 291.5 539.8 293.1L526.4 300.0Q523.3 301.6 520.1 303.0L505.3 309.7Q502.1 311.1 500.2 310.4L496.4 309.0Q494.5 308.2 493.7 306.5Z"/></clipPath><path d="M492.0 303.2Q491.1 301.5 494.2 299.8L517.3 286.6Q520.3 284.9 523.7 285.9L539.6 290.5Q542.9 291.5 539.8 293.1L526.4 300.0Q523.3 301.6 520.1 303.0L505.3 309.7Q502.1 311.1 500.2 310.4L496.4 309.0Q494.5 308.2 493.7 306.5Z" fill="url(#wall)" stroke="#d9b952" stroke-width="0.7"/><g clip-path="url(#h58)"><path d="M492.0 303.2Q491.1 301.5 494.2 299.8L517.3 286.6Q520.3 284.9 523.7 285.9L539.6 290.5Q542.9 291.5 539.8 293.1L526.4 300.0Q523.3 301.6 520.1 303.0L505.3 309.7Q502.1 311.1 500.2 310.4L496.4 309.0Q494.5 308.2 493.7 306.5Z" transform="translate(0,15)" fill="#626262"/></g><clipPath id="h59"><path d="M548.0 288.5Q547.2 287.1 549.9 285.4L555.2 281.9Q557.8 280.2 561.0 281.5L573.8 286.7Q577.0 288.0 575.1 289.5L571.4 292.4Q569.5 293.9 566.0 293.7L553.6 293.1Q550.1 292.9 549.4 291.4Z"/></clipPath><path d="M548.0 288.5Q547.2 287.1 549.9 285.4L555.2 281.9Q557.8 280.2 561.0 281.5L573.8 286.7Q577.0 288.0 575.1 289.5L571.4 292.4Q569.5 293.9 566.0 293.7L553.6 293.1Q550.1 292.9 549.4 291.4Z" fill="url(#wall)" stroke="#d9b952" stroke-width="0.7"/><g clip-path="url(#h59)"><path d="M548.0 288.5Q547.2 287.1 549.9 285.4L555.2 281.9Q557.8 280.2 561.0 281.5L573.8 286.7Q577.0 288.0 575.1 289.5L571.4 292.4Q569.5 293.9 566.0 293.7L553.6 293.1Q550.1 292.9 549.4 291.4Z" transform="translate(0,15)" fill="#626262"/></g><clipPath id="h60"><path d="M505.6 312.9Q502.7 311.0 506.1 309.9L543.0 297.7Q546.3 296.7 548.6 299.3L554.5 306.4Q556.8 309.0 555.0 312.1L550.1 320.4Q548.3 323.4 545.1 324.8L538.1 327.8Q534.9 329.2 531.7 327.8L522.8 323.8Q519.6 322.4 516.7 320.4Z"/></clipPath><path d="M505.6 312.9Q502.7 311.0 506.1 309.9L543.0 297.7Q546.3 296.7 548.6 299.3L554.5 306.4Q556.8 309.0 555.0 312.1L550.1 320.4Q548.3 323.4 545.1 324.8L538.1 327.8Q534.9 329.2 531.7 327.8L522.8 323.8Q519.6 322.4 516.7 320.4Z" fill="url(#wall)" stroke="#d9b952" stroke-width="0.7"/><g clip-path="url(#h60)"><path d="M505.6 312.9Q502.7 311.0 506.1 309.9L543.0 297.7Q546.3 296.7 548.6 299.3L554.5 306.4Q556.8 309.0 555.0 312.1L550.1 320.4Q548.3 323.4 545.1 324.8L538.1 327.8Q534.9 329.2 531.7 327.8L522.8 323.8Q519.6 322.4 516.7 320.4Z" transform="translate(0,15)" fill="#626262"/></g><clipPath id="h61"><path d="M557.4 300.8Q555.8 298.4 558.8 297.0L565.0 294.1Q568.0 292.6 571.3 293.8L605.6 305.8Q608.9 307.0 605.4 307.6L594.5 309.4Q591.1 309.9 587.6 309.7L565.8 308.2Q562.3 308.0 560.7 305.6Z"/></clipPath><path d="M557.4 300.8Q555.8 298.4 558.8 297.0L565.0 294.1Q568.0 292.6 571.3 293.8L605.6 305.8Q608.9 307.0 605.4 307.6L594.5 309.4Q591.1 309.9 587.6 309.7L565.8 308.2Q562.3 308.0 560.7 305.6Z" fill="url(#wall)" stroke="#d9b952" stroke-width="0.7"/><g clip-path="url(#h61)"><path d="M557.4 300.8Q555.8 298.4 558.8 297.0L565.0 294.1Q568.0 292.6 571.3 293.8L605.6 305.8Q608.9 307.0 605.4 307.6L594.5 309.4Q591.1 309.9 587.6 309.7L565.8 308.2Q562.3 308.0 560.7 305.6Z" transform="translate(0,15)" fill="#626262"/></g><clipPath id="h62"><path d="M444.0 317.6Q440.5 316.9 443.5 315.1L469.8 298.7Q472.8 296.8 475.7 298.8L484.2 304.5Q487.1 306.5 487.3 307.7L487.8 310.1Q488.1 311.3 484.8 312.5L466.4 319.7Q463.1 320.9 459.7 320.3Z"/></clipPath><path d="M444.0 317.6Q440.5 316.9 443.5 315.1L469.8 298.7Q472.8 296.8 475.7 298.8L484.2 304.5Q487.1 306.5 487.3 307.7L487.8 310.1Q488.1 311.3 484.8 312.5L466.4 319.7Q463.1 320.9 459.7 320.3Z" fill="url(#wall)" stroke="#d9b952" stroke-width="0.7"/><g clip-path="url(#h62)"><path d="M444.0 317.6Q440.5 316.9 443.5 315.1L469.8 298.7Q472.8 296.8 475.7 298.8L484.2 304.5Q487.1 306.5 487.3 307.7L487.8 310.1Q488.1 311.3 484.8 312.5L466.4 319.7Q463.1 320.9 459.7 320.3Z" transform="translate(0,15)" fill="#626262"/></g><clipPath id="h63"><path d="M433.3 324.4Q432.4 321.0 433.8 320.6L436.7 319.6Q438.1 319.1 441.3 320.5L461.7 329.2Q464.9 330.6 464.1 334.0L461.8 344.3Q461.0 347.8 458.7 348.3L453.9 349.2Q451.5 349.7 449.0 347.3L438.5 336.9Q436.1 334.4 435.1 331.1Z"/></clipPath><path d="M433.3 324.4Q432.4 321.0 433.8 320.6L436.7 319.6Q438.1 319.1 441.3 320.5L461.7 329.2Q464.9 330.6 464.1 334.0L461.8 344.3Q461.0 347.8 458.7 348.3L453.9 349.2Q451.5 349.7 449.0 347.3L438.5 336.9Q436.1 334.4 435.1 331.1Z" fill="url(#wall)" stroke="#d9b952" stroke-width="0.7"/><g clip-path="url(#h63)"><path d="M433.3 324.4Q432.4 321.0 433.8 320.6L436.7 319.6Q438.1 319.1 441.3 320.5L461.7 329.2Q464.9 330.6 464.1 334.0L461.8 344.3Q461.0 347.8 458.7 348.3L453.9 349.2Q451.5 349.7 449.0 347.3L438.5 336.9Q436.1 334.4 435.1 331.1Z" transform="translate(0,15)" fill="#626262"/></g><clipPath id="h64"><path d="M401.7 348.1Q398.9 346.0 401.8 344.0L423.5 329.7Q426.5 327.8 428.8 330.4L439.4 342.4Q441.8 345.0 441.3 346.9L440.3 350.7Q439.9 352.7 436.4 353.2L416.5 356.0Q413.0 356.5 410.2 354.4Z"/></clipPath><path d="M401.7 348.1Q398.9 346.0 401.8 344.0L423.5 329.7Q426.5 327.8 428.8 330.4L439.4 342.4Q441.8 345.0 441.3 346.9L440.3 350.7Q439.9 352.7 436.4 353.2L416.5 356.0Q413.0 356.5 410.2 354.4Z" fill="url(#wall)" stroke="#d9b952" stroke-width="0.7"/><g clip-path="url(#h64)"><path d="M401.7 348.1Q398.9 346.0 401.8 344.0L423.5 329.7Q426.5 327.8 428.8 330.4L439.4 342.4Q441.8 345.0 441.3 346.9L440.3 350.7Q439.9 352.7 436.4 353.2L416.5 356.0Q413.0 356.5 410.2 354.4Z" transform="translate(0,15)" fill="#626262"/></g><clipPath id="h65"><path d="M470.5 330.4Q468.8 329.4 471.9 327.7L492.6 315.8Q495.7 314.1 496.1 315.0L497.1 317.0Q497.6 317.9 494.7 319.9L478.3 331.3Q475.5 333.3 473.8 332.3Z"/></clipPath><path d="M470.5 330.4Q468.8 329.4 471.9 327.7L492.6 315.8Q495.7 314.1 496.1 315.0L497.1 317.0Q497.6 317.9 494.7 319.9L478.3 331.3Q475.5 333.3 473.8 332.3Z" fill="url(#wall)" stroke="#d9b952" stroke-width="0.7"/><g clip-path="url(#h65)"><path d="M470.5 330.4Q468.8 329.4 471.9 327.7L492.6 315.8Q495.7 314.1 496.1 315.0L497.1 317.0Q497.6 317.9 494.7 319.9L478.3 331.3Q475.5 333.3 473.8 332.3Z" transform="translate(0,15)" fill="#626262"/></g><clipPath id="h66"><path d="M490.0 331.8Q489.1 330.6 491.7 328.3L499.7 321.4Q502.4 319.1 505.5 320.6L527.8 331.1Q531.0 332.5 530.0 334.2L528.2 337.6Q527.2 339.2 523.8 339.9L515.4 341.6Q512.0 342.3 508.7 341.1L496.1 336.6Q492.8 335.4 491.9 334.2Z"/></clipPath><path d="M490.0 331.8Q489.1 330.6 491.7 328.3L499.7 321.4Q502.4 319.1 505.5 320.6L527.8 331.1Q531.0 332.5 530.0 334.2L528.2 337.6Q527.2 339.2 523.8 339.9L515.4 341.6Q512.0 342.3 508.7 341.1L496.1 336.6Q492.8 335.4 491.9 334.2Z" fill="url(#wall)" stroke="#d9b952" stroke-width="0.7"/><g clip-path="url(#h66)"><path d="M490.0 331.8Q489.1 330.6 491.7 328.3L499.7 321.4Q502.4 319.1 505.5 320.6L527.8 331.1Q531.0 332.5 530.0 334.2L528.2 337.6Q527.2 339.2 523.8 339.9L515.4 341.6Q512.0 342.3 508.7 341.1L496.1 336.6Q492.8 335.4 491.9 334.2Z" transform="translate(0,15)" fill="#626262"/></g><clipPath id="h67"><path d="M467.8 349.7Q464.3 349.0 465.9 345.9L470.3 337.7Q471.9 334.6 475.4 334.8L485.8 335.4Q489.3 335.6 491.7 337.3L496.4 340.6Q498.7 342.3 495.6 343.9L482.7 350.5Q479.6 352.1 476.2 351.4Z"/></clipPath><path d="M467.8 349.7Q464.3 349.0 465.9 345.9L470.3 337.7Q471.9 334.6 475.4 334.8L485.8 335.4Q489.3 335.6 491.7 337.3L496.4 340.6Q498.7 342.3 495.6 343.9L482.7 350.5Q479.6 352.1 476.2 351.4Z" fill="url(#wall)" stroke="#d9b952" stroke-width="0.7"/><g clip-path="url(#h67)"><path d="M467.8 349.7Q464.3 349.0 465.9 345.9L470.3 337.7Q471.9 334.6 475.4 334.8L485.8 335.4Q489.3 335.6 491.7 337.3L496.4 340.6Q498.7 342.3 495.6 343.9L482.7 350.5Q479.6 352.1 476.2 351.4Z" transform="translate(0,15)" fill="#626262"/></g><clipPath id="h68"><path d="M482.1 354.4Q479.7 351.9 483.1 351.2L525.6 342.2Q529.0 341.5 529.7 343.6L531.2 347.9Q531.9 350.0 529.8 352.4L525.6 357.2Q523.5 359.5 520.2 360.8L503.7 367.0Q500.4 368.2 498.5 367.5L494.7 366.0Q492.8 365.3 490.4 362.8Z"/></clipPath><path d="M482.1 354.4Q479.7 351.9 483.1 351.2L525.6 342.2Q529.0 341.5 529.7 343.6L531.2 347.9Q531.9 350.0 529.8 352.4L525.6 357.2Q523.5 359.5 520.2 360.8L503.7 367.0Q500.4 368.2 498.5 367.5L494.7 366.0Q492.8 365.3 490.4 362.8Z" fill="url(#wall)" stroke="#d9b952" stroke-width="0.7"/><g clip-path="url(#h68)"><path d="M482.1 354.4Q479.7 351.9 483.1 351.2L525.6 342.2Q529.0 341.5 529.7 343.6L531.2 347.9Q531.9 350.0 529.8 352.4L525.6 357.2Q523.5 359.5 520.2 360.8L503.7 367.0Q500.4 368.2 498.5 367.5L494.7 366.0Q492.8 365.3 490.4 362.8Z" transform="translate(0,15)" fill="#626262"/></g><clipPath id="h69"><path d="M426.0 362.5Q423.1 360.6 426.5 360.0L452.0 355.4Q455.5 354.8 455.9 358.3L457.1 368.6Q457.5 372.1 456.0 373.6L453.1 376.5Q451.7 377.9 449.2 376.5L444.3 373.7Q441.9 372.3 438.9 370.4Z"/></clipPath><path d="M426.0 362.5Q423.1 360.6 426.5 360.0L452.0 355.4Q455.5 354.8 455.9 358.3L457.1 368.6Q457.5 372.1 456.0 373.6L453.1 376.5Q451.7 377.9 449.2 376.5L444.3 373.7Q441.9 372.3 438.9 370.4Z" fill="url(#wall)" stroke="#d9b952" stroke-width="0.7"/><g clip-path="url(#h69)"><path d="M426.0 362.5Q423.1 360.6 426.5 360.0L452.0 355.4Q455.5 354.8 455.9 358.3L457.1 368.6Q457.5 372.1 456.0 373.6L453.1 376.5Q451.7 377.9 449.2 376.5L444.3 373.7Q441.9 372.3 438.9 370.4Z" transform="translate(0,15)" fill="#626262"/></g><clipPath id="h70"><path d="M457.7 360.0Q457.4 356.5 460.9 356.2L469.1 355.7Q472.6 355.4 475.2 357.8L490.0 371.3Q492.6 373.6 490.3 376.2L484.5 382.5Q482.2 385.1 478.8 385.6L472.1 386.6Q468.8 387.1 466.5 384.4L461.4 378.2Q459.1 375.6 458.8 372.1Z"/></clipPath><path d="M457.7 360.0Q457.4 356.5 460.9 356.2L469.1 355.7Q472.6 355.4 475.2 357.8L490.0 371.3Q492.6 373.6 490.3 376.2L484.5 382.5Q482.2 385.1 478.8 385.6L472.1 386.6Q468.8 387.1 466.5 384.4L461.4 378.2Q459.1 375.6 458.8 372.1Z" fill="url(#wall)" stroke="#d9b952" stroke-width="0.7"/><g clip-path="url(#h70)"><path d="M457.7 360.0Q457.4 356.5 460.9 356.2L469.1 355.7Q472.6 355.4 475.2 357.8L490.0 371.3Q492.6 373.6 490.3 376.2L484.5 382.5Q482.2 385.1 478.8 385.6L472.1 386.6Q468.8 387.1 466.5 384.4L461.4 378.2Q459.1 375.6 458.8 372.1Z" transform="translate(0,15)" fill="#626262"/></g><clipPath id="h71"><path d="M496.9 376.4Q496.5 375.0 499.8 373.9L514.3 369.3Q517.6 368.2 519.3 371.3L527.3 385.3Q529.0 388.3 525.5 388.0L515.4 387.0Q511.9 386.7 508.7 385.3L501.5 382.1Q498.3 380.7 497.9 379.3Z"/></clipPath><path d="M496.9 376.4Q496.5 375.0 499.8 373.9L514.3 369.3Q517.6 368.2 519.3 371.3L527.3 385.3Q529.0 388.3 525.5 388.0L515.4 387.0Q511.9 386.7 508.7 385.3L501.5 382.1Q498.3 380.7 497.9 379.3Z" fill="url(#wall)" stroke="#d9b952" stroke-width="0.7"/><g clip-path="url(#h71)"><path d="M496.9 376.4Q496.5 375.0 499.8 373.9L514.3 369.3Q517.6 368.2 519.3 371.3L527.3 385.3Q529.0 388.3 525.5 388.0L515.4 387.0Q511.9 386.7 508.7 385.3L501.5 382.1Q498.3 380.7 497.9 379.3Z" transform="translate(0,15)" fill="#626262"/></g><clipPath id="h72"><path d="M479.1 389.9Q476.7 387.5 479.9 386.1L486.9 383.0Q490.1 381.6 493.2 383.1L508.0 389.9Q511.2 391.3 509.8 393.5L506.9 397.8Q505.5 400.0 502.0 399.5L489.6 397.7Q486.1 397.2 483.8 394.8Z"/></clipPath><path d="M479.1 389.9Q476.7 387.5 479.9 386.1L486.9 383.0Q490.1 381.6 493.2 383.1L508.0 389.9Q511.2 391.3 509.8 393.5L506.9 397.8Q505.5 400.0 502.0 399.5L489.6 397.7Q486.1 397.2 483.8 394.8Z" fill="url(#wall)" stroke="#d9b952" stroke-width="0.7"/><g clip-path="url(#h72)"><path d="M479.1 389.9Q476.7 387.5 479.9 386.1L486.9 383.0Q490.1 381.6 493.2 383.1L508.0 389.9Q511.2 391.3 509.8 393.5L506.9 397.8Q505.5 400.0 502.0 399.5L489.6 397.7Q486.1 397.2 483.8 394.8Z" transform="translate(0,15)" fill="#626262"/></g><clipPath id="h73"><path d="M553.7 324.6Q553.5 323.2 556.0 320.7L561.4 315.2Q563.8 312.7 567.3 312.7L619.0 311.9Q622.5 311.8 624.2 313.2L627.4 316.1Q629.1 317.5 627.1 320.4L620.7 329.7Q618.8 332.6 615.3 332.9L597.7 334.5Q594.2 334.8 590.7 334.2L557.9 329.3Q554.4 328.8 554.2 327.4Z"/></clipPath><path d="M553.7 324.6Q553.5 323.2 556.0 320.7L561.4 315.2Q563.8 312.7 567.3 312.7L619.0 311.9Q622.5 311.8 624.2 313.2L627.4 316.1Q629.1 317.5 627.1 320.4L620.7 329.7Q618.8 332.6 615.3 332.9L597.7 334.5Q594.2 334.8 590.7 334.2L557.9 329.3Q554.4 328.8 554.2 327.4Z" fill="url(#wall)" stroke="#d9b952" stroke-width="0.7"/><g clip-path="url(#h73)"><path d="M553.7 324.6Q553.5 323.2 556.0 320.7L561.4 315.2Q563.8 312.7 567.3 312.7L619.0 311.9Q622.5 311.8 624.2 313.2L627.4 316.1Q629.1 317.5 627.1 320.4L620.7 329.7Q618.8 332.6 615.3 332.9L597.7 334.5Q594.2 334.8 590.7 334.2L557.9 329.3Q554.4 328.8 554.2 327.4Z" transform="translate(0,15)" fill="#626262"/></g><clipPath id="h74"><path d="M618.1 343.6Q615.6 341.1 618.1 338.6L632.1 324.5Q634.6 322.0 638.0 322.8L654.1 326.9Q657.5 327.8 657.9 329.7L658.9 333.5Q659.4 335.4 656.8 337.7L642.9 350.3Q640.3 352.7 637.0 352.7L630.3 352.6Q626.9 352.6 624.5 350.1Z"/></clipPath><path d="M618.1 343.6Q615.6 341.1 618.1 338.6L632.1 324.5Q634.6 322.0 638.0 322.8L654.1 326.9Q657.5 327.8 657.9 329.7L658.9 333.5Q659.4 335.4 656.8 337.7L642.9 350.3Q640.3 352.7 637.0 352.7L630.3 352.6Q626.9 352.6 624.5 350.1Z" fill="url(#wall)" stroke="#d9b952" stroke-width="0.7"/><g clip-path="url(#h74)"><path d="M618.1 343.6Q615.6 341.1 618.1 338.6L632.1 324.5Q634.6 322.0 638.0 322.8L654.1 326.9Q657.5 327.8 657.9 329.7L658.9 333.5Q659.4 335.4 656.8 337.7L642.9 350.3Q640.3 352.7 637.0 352.7L630.3 352.6Q626.9 352.6 624.5 350.1Z" transform="translate(0,15)" fill="#626262"/></g><clipPath id="h75"><path d="M606.8 354.4Q605.5 351.1 608.4 349.9L614.2 347.5Q617.1 346.3 619.8 348.5L627.0 354.6Q629.7 356.9 627.5 359.6L623.2 364.9Q621.0 367.6 618.6 367.3L613.7 366.9Q611.3 366.6 610.1 363.3Z"/></clipPath><path d="M606.8 354.4Q605.5 351.1 608.4 349.9L614.2 347.5Q617.1 346.3 619.8 348.5L627.0 354.6Q629.7 356.9 627.5 359.6L623.2 364.9Q621.0 367.6 618.6 367.3L613.7 366.9Q611.3 366.6 610.1 363.3Z" fill="url(#wall)" stroke="#d9b952" stroke-width="0.7"/><g clip-path="url(#h75)"><path d="M606.8 354.4Q605.5 351.1 608.4 349.9L614.2 347.5Q617.1 346.3 619.8 348.5L627.0 354.6Q629.7 356.9 627.5 359.6L623.2 364.9Q621.0 367.6 618.6 367.3L613.7 366.9Q611.3 366.6 610.1 363.3Z" transform="translate(0,15)" fill="#626262"/></g><clipPath id="h76"><path d="M582.7 369.0Q580.2 366.5 583.3 364.8L600.1 354.9Q603.2 353.1 604.8 356.2L611.2 368.2Q612.8 371.3 610.4 373.5L605.6 377.9Q603.2 380.0 600.8 380.0L596.0 380.0Q593.5 380.0 591.1 377.5Z"/></clipPath><path d="M582.7 369.0Q580.2 366.5 583.3 364.8L600.1 354.9Q603.2 353.1 604.8 356.2L611.2 368.2Q612.8 371.3 610.4 373.5L605.6 377.9Q603.2 380.0 600.8 380.0L596.0 380.0Q593.5 380.0 591.1 377.5Z" fill="url(#wall)" stroke="#d9b952" stroke-width="0.7"/><g clip-path="url(#h76)"><path d="M582.7 369.0Q580.2 366.5 583.3 364.8L600.1 354.9Q603.2 353.1 604.8 356.2L611.2 368.2Q612.8 371.3 610.4 373.5L605.6 377.9Q603.2 380.0 600.8 380.0L596.0 380.0Q593.5 380.0 591.1 377.5Z" transform="translate(0,15)" fill="#626262"/></g><clipPath id="h77"><path d="M535.8 339.9Q534.6 337.6 537.2 336.1L542.4 333.3Q545.0 331.8 548.1 333.5L582.8 352.0Q585.8 353.7 584.0 355.8L580.2 360.1Q578.3 362.3 575.2 362.1L569.1 361.7Q566.0 361.5 563.0 359.8L542.3 348.7Q539.3 347.1 538.1 344.7Z"/></clipPath><path d="M535.8 339.9Q534.6 337.6 537.2 336.1L542.4 333.3Q545.0 331.8 548.1 333.5L582.8 352.0Q585.8 353.7 584.0 355.8L580.2 360.1Q578.3 362.3 575.2 362.1L569.1 361.7Q566.0 361.5 563.0 359.8L542.3 348.7Q539.3 347.1 538.1 344.7Z" fill="url(#wall)" stroke="#d9b952" stroke-width="0.7"/><g clip-path="url(#h77)"><path d="M535.8 339.9Q534.6 337.6 537.2 336.1L542.4 333.3Q545.0 331.8 548.1 333.5L582.8 352.0Q585.8 353.7 584.0 355.8L580.2 360.1Q578.3 362.3 575.2 362.1L569.1 361.7Q566.0 361.5 563.0 359.8L542.3 348.7Q539.3 347.1 538.1 344.7Z" transform="translate(0,15)" fill="#626262"/></g><clipPath id="h78"><path d="M536.0 357.3Q534.1 354.4 536.4 353.9L541.2 352.9Q543.5 352.4 546.4 354.5L567.5 369.5Q570.3 371.6 567.9 373.5L563.2 377.3Q560.8 379.3 557.6 377.9L550.5 375.0Q547.3 373.7 545.3 370.8Z"/></clipPath><path d="M536.0 357.3Q534.1 354.4 536.4 353.9L541.2 352.9Q543.5 352.4 546.4 354.5L567.5 369.5Q570.3 371.6 567.9 373.5L563.2 377.3Q560.8 379.3 557.6 377.9L550.5 375.0Q547.3 373.7 545.3 370.8Z" fill="url(#wall)" stroke="#d9b952" stroke-width="0.7"/><g clip-path="url(#h78)"><path d="M536.0 357.3Q534.1 354.4 536.4 353.9L541.2 352.9Q543.5 352.4 546.4 354.5L567.5 369.5Q570.3 371.6 567.9 373.5L563.2 377.3Q560.8 379.3 557.6 377.9L550.5 375.0Q547.3 373.7 545.3 370.8Z" transform="translate(0,15)" fill="#626262"/></g><clipPath id="h79"><path d="M552.2 385.9Q549.7 383.5 553.0 382.2L573.1 374.2Q576.4 372.9 579.4 374.7L589.6 380.7Q592.6 382.5 590.6 385.4L586.0 392.1Q584.1 395.0 580.6 395.5L568.3 397.4Q564.8 397.9 562.3 395.5Z"/></clipPath><path d="M552.2 385.9Q549.7 383.5 553.0 382.2L573.1 374.2Q576.4 372.9 579.4 374.7L589.6 380.7Q592.6 382.5 590.6 385.4L586.0 392.1Q584.1 395.0 580.6 395.5L568.3 397.4Q564.8 397.9 562.3 395.5Z" fill="url(#wall)" stroke="#d9b952" stroke-width="0.7"/><g clip-path="url(#h79)"><path d="M552.2 385.9Q549.7 383.5 553.0 382.2L573.1 374.2Q576.4 372.9 579.4 374.7L589.6 380.7Q592.6 382.5 590.6 385.4L586.0 392.1Q584.1 395.0 580.6 395.5L568.3 397.4Q564.8 397.9 562.3 395.5Z" transform="translate(0,15)" fill="#626262"/></g><clipPath id="h80"><path d="M523.1 367.4Q521.9 364.1 524.3 362.9L529.1 360.6Q531.5 359.4 533.4 362.3L544.9 379.4Q546.8 382.4 544.9 384.5L541.1 388.8Q539.1 391.0 536.7 389.3L531.9 386.0Q529.5 384.4 528.2 381.1Z"/></clipPath><path d="M523.1 367.4Q521.9 364.1 524.3 362.9L529.1 360.6Q531.5 359.4 533.4 362.3L544.9 379.4Q546.8 382.4 544.9 384.5L541.1 388.8Q539.1 391.0 536.7 389.3L531.9 386.0Q529.5 384.4 528.2 381.1Z" fill="url(#wall)" stroke="#d9b952" stroke-width="0.7"/><g clip-path="url(#h80)"><path d="M523.1 367.4Q521.9 364.1 524.3 362.9L529.1 360.6Q531.5 359.4 533.4 362.3L544.9 379.4Q546.8 382.4 544.9 384.5L541.1 388.8Q539.1 391.0 536.7 389.3L531.9 386.0Q529.5 384.4 528.2 381.1Z" transform="translate(0,15)" fill="#626262"/></g><clipPath id="h81"><path d="M498.4 376.7Q495.7 374.4 499.0 373.4L514.4 368.7Q517.7 367.6 519.4 370.7L527.4 384.8Q529.1 387.8 525.6 387.9L515.4 388.0Q511.9 388.0 509.2 385.8Z"/></clipPath><path d="M498.4 376.7Q495.7 374.4 499.0 373.4L514.4 368.7Q517.7 367.6 519.4 370.7L527.4 384.8Q529.1 387.8 525.6 387.9L515.4 388.0Q511.9 388.0 509.2 385.8Z" fill="url(#wall)" stroke="#d9b952" stroke-width="0.7"/><g clip-path="url(#h81)"><path d="M498.4 376.7Q495.7 374.4 499.0 373.4L514.4 368.7Q517.7 367.6 519.4 370.7L527.4 384.8Q529.1 387.8 525.6 387.9L515.4 388.0Q511.9 388.0 509.2 385.8Z" transform="translate(0,15)" fill="#626262"/></g><clipPath id="h82"><path d="M507.1 397.8Q505.7 395.9 509.0 394.8L519.7 391.1Q523.0 390.0 525.7 392.3L531.8 397.5Q534.5 399.7 532.1 401.7L527.3 405.6Q525.0 407.5 521.6 406.6L514.7 404.6Q511.3 403.6 509.9 401.7Z"/></clipPath><path d="M507.1 397.8Q505.7 395.9 509.0 394.8L519.7 391.1Q523.0 390.0 525.7 392.3L531.8 397.5Q534.5 399.7 532.1 401.7L527.3 405.6Q525.0 407.5 521.6 406.6L514.7 404.6Q511.3 403.6 509.9 401.7Z" fill="url(#wall)" stroke="#d9b952" stroke-width="0.7"/><g clip-path="url(#h82)"><path d="M507.1 397.8Q505.7 395.9 509.0 394.8L519.7 391.1Q523.0 390.0 525.7 392.3L531.8 397.5Q534.5 399.7 532.1 401.7L527.3 405.6Q525.0 407.5 521.6 406.6L514.7 404.6Q511.3 403.6 509.9 401.7Z" transform="translate(0,15)" fill="#626262"/></g><clipPath id="h83"><path d="M496.8 403.8Q493.9 401.9 496.9 401.1L503.1 399.6Q506.2 398.9 509.2 400.7L522.5 408.7Q525.5 410.5 525.2 412.4L524.7 416.3Q524.5 418.2 522.3 417.7L518.0 416.9Q515.9 416.4 513.0 414.5Z"/></clipPath><path d="M496.8 403.8Q493.9 401.9 496.9 401.1L503.1 399.6Q506.2 398.9 509.2 400.7L522.5 408.7Q525.5 410.5 525.2 412.4L524.7 416.3Q524.5 418.2 522.3 417.7L518.0 416.9Q515.9 416.4 513.0 414.5Z" fill="url(#wall)" stroke="#d9b952" stroke-width="0.7"/><g clip-path="url(#h83)"><path d="M496.8 403.8Q493.9 401.9 496.9 401.1L503.1 399.6Q506.2 398.9 509.2 400.7L522.5 408.7Q525.5 410.5 525.2 412.4L524.7 416.3Q524.5 418.2 522.3 417.7L518.0 416.9Q515.9 416.4 513.0 414.5Z" transform="translate(0,15)" fill="#626262"/></g><clipPath id="h84"><path d="M529.2 416.7Q526.7 414.2 528.3 411.1L534.7 398.3Q536.2 395.1 539.6 395.8L561.4 400.2Q564.9 400.9 565.3 402.3L566.3 405.2Q566.8 406.6 563.8 408.5L554.6 414.5Q551.6 416.4 548.8 418.4L541.0 423.7Q538.1 425.7 535.7 423.2Z"/></clipPath><path d="M529.2 416.7Q526.7 414.2 528.3 411.1L534.7 398.3Q536.2 395.1 539.6 395.8L561.4 400.2Q564.9 400.9 565.3 402.3L566.3 405.2Q566.8 406.6 563.8 408.5L554.6 414.5Q551.6 416.4 548.8 418.4L541.0 423.7Q538.1 425.7 535.7 423.2Z" fill="url(#wall)" stroke="#d9b952" stroke-width="0.7"/><g clip-path="url(#h84)"><path d="M529.2 416.7Q526.7 414.2 528.3 411.1L534.7 398.3Q536.2 395.1 539.6 395.8L561.4 400.2Q564.9 400.9 565.3 402.3L566.3 405.2Q566.8 406.6 563.8 408.5L554.6 414.5Q551.6 416.4 548.8 418.4L541.0 423.7Q538.1 425.7 535.7 423.2Z" transform="translate(0,15)" fill="#626262"/></g><clipPath id="h85"><path d="M569.1 340.0Q567.7 337.9 571.2 337.3L583.3 335.4Q586.7 334.8 590.1 335.8L607.2 340.7Q610.5 341.7 608.9 343.8L605.6 348.1Q604.0 350.3 600.5 350.7L588.2 352.0Q584.8 352.4 581.9 350.9L576.2 348.0Q573.3 346.5 571.9 344.3Z"/></clipPath><path d="M569.1 340.0Q567.7 337.9 571.2 337.3L583.3 335.4Q586.7 334.8 590.1 335.8L607.2 340.7Q610.5 341.7 608.9 343.8L605.6 348.1Q604.0 350.3 600.5 350.7L588.2 352.0Q584.8 352.4 581.9 350.9L576.2 348.0Q573.3 346.5 571.9 344.3Z" fill="url(#wall)" stroke="#d9b952" stroke-width="0.7"/><g clip-path="url(#h85)"><path d="M569.1 340.0Q567.7 337.9 571.2 337.3L583.3 335.4Q586.7 334.8 590.1 335.8L607.2 340.7Q610.5 341.7 608.9 343.8L605.6 348.1Q604.0 350.3 600.5 350.7L588.2 352.0Q584.8 352.4 581.9 350.9L576.2 348.0Q573.3 346.5 571.9 344.3Z" transform="translate(0,15)" fill="#626262"/></g><ellipse cx="507.7" cy="257" rx="2.1" ry="1.7" fill="#fff27e"/><ellipse cx="534.7" cy="256.5" rx="2.1" ry="1.7" fill="#fff27e"/><ellipse cx="384.5" cy="337.7" rx="2.1" ry="1.7" fill="#fff27e"/><ellipse cx="384.5" cy="355" rx="2.1" ry="1.7" fill="#fff27e"/><ellipse cx="672.4" cy="326" rx="2.1" ry="1.7" fill="#fff27e"/><ellipse cx="676.6" cy="343.3" rx="2.1" ry="1.7" fill="#fff27e"/><ellipse cx="525" cy="434.5" rx="2.1" ry="1.7" fill="#fff27e"/><ellipse cx="554.2" cy="433.1" rx="2.1" ry="1.7" fill="#fff27e"/><ellipse cx="646" cy="418" rx="2.1" ry="1.7" fill="#fff27e"/><ellipse cx="805.3" cy="503.5" rx="2.1" ry="1.7" fill="#fff27e"/><polygon points="402.0,534.0 601.7,655.0 601.7,668.5 402.0,547.5" fill="#d3b45a" /><polygon points="601.7,661.8 609.4,666.4 609.4,673.2 601.7,668.5" fill="#d3b45a" /><polygon points="601.7,655.0 689.2,575.0 689.2,581.8 601.7,661.8" fill="#b29a55" /><polygon points="601.7,661.8 689.2,581.8 696.9,586.4 609.4,666.4" fill="#ffe16d" /><polygon points="609.4,666.4 696.9,586.4 696.9,593.2 609.4,673.2" fill="#b29a55" /><polygon points="498.0,464.8 689.2,575.0 601.7,655.0 402.0,534.0" fill="#fddd6b" /><polygon points="498.0,464.8 689.2,575.0 689.2,581.8 696.9,586.4 696.9,593.2 609.4,673.2 601.7,668.5 402.0,547.5 402.0,534.0" fill="none" stroke="#1898f0" stroke-width="3.4" stroke-linejoin="round"/><clipPath id="h86"><path d="M486.5 491.3Q485.0 488.1 487.2 486.0L491.4 481.8Q493.5 479.7 494.6 480.1L496.7 480.8Q497.7 481.1 497.7 484.6L497.7 493.1Q497.7 496.6 496.0 497.6L492.5 499.7Q490.7 500.7 489.3 497.5Z"/></clipPath><path d="M486.5 491.3Q485.0 488.1 487.2 486.0L491.4 481.8Q493.5 479.7 494.6 480.1L496.7 480.8Q497.7 481.1 497.7 484.6L497.7 493.1Q497.7 496.6 496.0 497.6L492.5 499.7Q490.7 500.7 489.3 497.5Z" fill="url(#wall)" stroke="#d9b952" stroke-width="0.7"/><clipPath id="g86"><path d="M486.5 491.3Q485.0 488.1 487.2 486.0L491.4 481.8Q493.5 479.7 494.6 480.1L496.7 480.8Q497.7 481.1 497.7 484.6L497.7 493.1Q497.7 496.6 496.0 497.6L492.5 499.7Q490.7 500.7 489.3 497.5Z" transform="translate(0,16)"/></clipPath><g clip-path="url(#h86)"><g clip-path="url(#g86)"><path d="M486.5 491.3Q485.0 488.1 487.2 486.0L491.4 481.8Q493.5 479.7 494.6 480.1L496.7 480.8Q497.7 481.1 497.7 484.6L497.7 493.1Q497.7 496.6 496.0 497.6L492.5 499.7Q490.7 500.7 489.3 497.5Z" transform="translate(0,16)" fill="#626262" stroke="#1cb6f5" stroke-width="5.0"/><path d="M486.5 491.3Q485.0 488.1 487.2 486.0L491.4 481.8Q493.5 479.7 494.6 480.1L496.7 480.8Q497.7 481.1 497.7 484.6L497.7 493.1Q497.7 496.6 496.0 497.6L492.5 499.7Q490.7 500.7 489.3 497.5Z" fill="none" stroke="#1cb6f5" stroke-width="5.0"/></g></g><clipPath id="h87"><path d="M473.4 500.5Q470.9 498.4 473.4 496.3L478.3 492.1Q480.7 490.0 482.5 493.0L487.3 501.0Q489.1 504.0 487.0 504.7L482.8 506.1Q480.7 506.9 478.3 504.7Z"/></clipPath><path d="M473.4 500.5Q470.9 498.4 473.4 496.3L478.3 492.1Q480.7 490.0 482.5 493.0L487.3 501.0Q489.1 504.0 487.0 504.7L482.8 506.1Q480.7 506.9 478.3 504.7Z" fill="url(#wall)" stroke="#d9b952" stroke-width="0.7"/><clipPath id="g87"><path d="M473.4 500.5Q470.9 498.4 473.4 496.3L478.3 492.1Q480.7 490.0 482.5 493.0L487.3 501.0Q489.1 504.0 487.0 504.7L482.8 506.1Q480.7 506.9 478.3 504.7Z" transform="translate(0,16)"/></clipPath><g clip-path="url(#h87)"><g clip-path="url(#g87)"><path d="M473.4 500.5Q470.9 498.4 473.4 496.3L478.3 492.1Q480.7 490.0 482.5 493.0L487.3 501.0Q489.1 504.0 487.0 504.7L482.8 506.1Q480.7 506.9 478.3 504.7Z" transform="translate(0,16)" fill="#626262" stroke="#1cb6f5" stroke-width="5.0"/><path d="M473.4 500.5Q470.9 498.4 473.4 496.3L478.3 492.1Q480.7 490.0 482.5 493.0L487.3 501.0Q489.1 504.0 487.0 504.7L482.8 506.1Q480.7 506.9 478.3 504.7Z" fill="none" stroke="#1cb6f5" stroke-width="5.0"/></g></g><clipPath id="h88"><path d="M458.7 511.2Q455.3 510.1 458.2 508.0L466.3 502.3Q469.2 500.2 471.8 502.6L477.7 507.8Q480.3 510.1 478.2 511.5L474.1 514.4Q472.0 515.8 468.7 514.6Z"/></clipPath><path d="M458.7 511.2Q455.3 510.1 458.2 508.0L466.3 502.3Q469.2 500.2 471.8 502.6L477.7 507.8Q480.3 510.1 478.2 511.5L474.1 514.4Q472.0 515.8 468.7 514.6Z" fill="url(#wall)" stroke="#d9b952" stroke-width="0.7"/><clipPath id="g88"><path d="M458.7 511.2Q455.3 510.1 458.2 508.0L466.3 502.3Q469.2 500.2 471.8 502.6L477.7 507.8Q480.3 510.1 478.2 511.5L474.1 514.4Q472.0 515.8 468.7 514.6Z" transform="translate(0,16)"/></clipPath><g clip-path="url(#h88)"><g clip-path="url(#g88)"><path d="M458.7 511.2Q455.3 510.1 458.2 508.0L466.3 502.3Q469.2 500.2 471.8 502.6L477.7 507.8Q480.3 510.1 478.2 511.5L474.1 514.4Q472.0 515.8 468.7 514.6Z" transform="translate(0,16)" fill="#626262" stroke="#1cb6f5" stroke-width="5.0"/><path d="M458.7 511.2Q455.3 510.1 458.2 508.0L466.3 502.3Q469.2 500.2 471.8 502.6L477.7 507.8Q480.3 510.1 478.2 511.5L474.1 514.4Q472.0 515.8 468.7 514.6Z" fill="none" stroke="#1cb6f5" stroke-width="5.0"/></g></g><clipPath id="h89"><path d="M500.5 498.5Q497.2 497.4 498.1 494.0L500.4 485.7Q501.3 482.3 504.7 482.3L511.6 482.2Q515.0 482.2 517.9 484.0L536.7 495.6Q539.6 497.4 539.3 498.8L538.6 501.5Q538.3 502.9 534.8 503.1L521.2 504.2Q517.7 504.5 514.4 503.3Z"/></clipPath><path d="M500.5 498.5Q497.2 497.4 498.1 494.0L500.4 485.7Q501.3 482.3 504.7 482.3L511.6 482.2Q515.0 482.2 517.9 484.0L536.7 495.6Q539.6 497.4 539.3 498.8L538.6 501.5Q538.3 502.9 534.8 503.1L521.2 504.2Q517.7 504.5 514.4 503.3Z" fill="url(#wall)" stroke="#d9b952" stroke-width="0.7"/><clipPath id="g89"><path d="M500.5 498.5Q497.2 497.4 498.1 494.0L500.4 485.7Q501.3 482.3 504.7 482.3L511.6 482.2Q515.0 482.2 517.9 484.0L536.7 495.6Q539.6 497.4 539.3 498.8L538.6 501.5Q538.3 502.9 534.8 503.1L521.2 504.2Q517.7 504.5 514.4 503.3Z" transform="translate(0,16)"/></clipPath><g clip-path="url(#h89)"><g clip-path="url(#g89)"><path d="M500.5 498.5Q497.2 497.4 498.1 494.0L500.4 485.7Q501.3 482.3 504.7 482.3L511.6 482.2Q515.0 482.2 517.9 484.0L536.7 495.6Q539.6 497.4 539.3 498.8L538.6 501.5Q538.3 502.9 534.8 503.1L521.2 504.2Q517.7 504.5 514.4 503.3Z" transform="translate(0,16)" fill="#626262" stroke="#1cb6f5" stroke-width="5.0"/><path d="M500.5 498.5Q497.2 497.4 498.1 494.0L500.4 485.7Q501.3 482.3 504.7 482.3L511.6 482.2Q515.0 482.2 517.9 484.0L536.7 495.6Q539.6 497.4 539.3 498.8L538.6 501.5Q538.3 502.9 534.8 503.1L521.2 504.2Q517.7 504.5 514.4 503.3Z" fill="none" stroke="#1cb6f5" stroke-width="5.0"/></g></g><clipPath id="h90"><path d="M479.6 527.6Q478.9 525.2 479.9 521.9L482.0 515.0Q483.0 511.6 486.5 511.3L525.8 507.8Q529.3 507.5 531.1 510.5L535.7 518.1Q537.5 521.1 537.1 523.9L536.4 529.3Q536.1 532.0 533.3 534.1L524.0 540.9Q521.2 543.0 517.7 543.0L500.0 543.0Q496.5 543.0 493.5 541.3L484.7 536.4Q481.6 534.8 480.9 532.4Z"/></clipPath><path d="M479.6 527.6Q478.9 525.2 479.9 521.9L482.0 515.0Q483.0 511.6 486.5 511.3L525.8 507.8Q529.3 507.5 531.1 510.5L535.7 518.1Q537.5 521.1 537.1 523.9L536.4 529.3Q536.1 532.0 533.3 534.1L524.0 540.9Q521.2 543.0 517.7 543.0L500.0 543.0Q496.5 543.0 493.5 541.3L484.7 536.4Q481.6 534.8 480.9 532.4Z" fill="url(#wall)" stroke="#d9b952" stroke-width="0.7"/><clipPath id="g90"><path d="M479.6 527.6Q478.9 525.2 479.9 521.9L482.0 515.0Q483.0 511.6 486.5 511.3L525.8 507.8Q529.3 507.5 531.1 510.5L535.7 518.1Q537.5 521.1 537.1 523.9L536.4 529.3Q536.1 532.0 533.3 534.1L524.0 540.9Q521.2 543.0 517.7 543.0L500.0 543.0Q496.5 543.0 493.5 541.3L484.7 536.4Q481.6 534.8 480.9 532.4Z" transform="translate(0,16)"/></clipPath><g clip-path="url(#h90)"><g clip-path="url(#g90)"><path d="M479.6 527.6Q478.9 525.2 479.9 521.9L482.0 515.0Q483.0 511.6 486.5 511.3L525.8 507.8Q529.3 507.5 531.1 510.5L535.7 518.1Q537.5 521.1 537.1 523.9L536.4 529.3Q536.1 532.0 533.3 534.1L524.0 540.9Q521.2 543.0 517.7 543.0L500.0 543.0Q496.5 543.0 493.5 541.3L484.7 536.4Q481.6 534.8 480.9 532.4Z" transform="translate(0,16)" fill="#626262" stroke="#1cb6f5" stroke-width="5.0"/><path d="M479.6 527.6Q478.9 525.2 479.9 521.9L482.0 515.0Q483.0 511.6 486.5 511.3L525.8 507.8Q529.3 507.5 531.1 510.5L535.7 518.1Q537.5 521.1 537.1 523.9L536.4 529.3Q536.1 532.0 533.3 534.1L524.0 540.9Q521.2 543.0 517.7 543.0L500.0 543.0Q496.5 543.0 493.5 541.3L484.7 536.4Q481.6 534.8 480.9 532.4Z" fill="none" stroke="#1cb6f5" stroke-width="5.0"/></g></g><clipPath id="h91"><path d="M428.9 533.1Q426.6 530.5 429.5 528.5L445.5 517.3Q448.4 515.3 451.9 515.6L466.8 516.6Q470.3 516.8 471.3 520.2L473.4 527.2Q474.4 530.5 471.5 532.4L462.4 538.3Q459.5 540.2 456.0 540.9L442.3 543.5Q438.8 544.2 436.5 541.6Z"/></clipPath><path d="M428.9 533.1Q426.6 530.5 429.5 528.5L445.5 517.3Q448.4 515.3 451.9 515.6L466.8 516.6Q470.3 516.8 471.3 520.2L473.4 527.2Q474.4 530.5 471.5 532.4L462.4 538.3Q459.5 540.2 456.0 540.9L442.3 543.5Q438.8 544.2 436.5 541.6Z" fill="url(#wall)" stroke="#d9b952" stroke-width="0.7"/><clipPath id="g91"><path d="M428.9 533.1Q426.6 530.5 429.5 528.5L445.5 517.3Q448.4 515.3 451.9 515.6L466.8 516.6Q470.3 516.8 471.3 520.2L473.4 527.2Q474.4 530.5 471.5 532.4L462.4 538.3Q459.5 540.2 456.0 540.9L442.3 543.5Q438.8 544.2 436.5 541.6Z" transform="translate(0,16)"/></clipPath><g clip-path="url(#h91)"><g clip-path="url(#g91)"><path d="M428.9 533.1Q426.6 530.5 429.5 528.5L445.5 517.3Q448.4 515.3 451.9 515.6L466.8 516.6Q470.3 516.8 471.3 520.2L473.4 527.2Q474.4 530.5 471.5 532.4L462.4 538.3Q459.5 540.2 456.0 540.9L442.3 543.5Q438.8 544.2 436.5 541.6Z" transform="translate(0,16)" fill="#626262" stroke="#1cb6f5" stroke-width="5.0"/><path d="M428.9 533.1Q426.6 530.5 429.5 528.5L445.5 517.3Q448.4 515.3 451.9 515.6L466.8 516.6Q470.3 516.8 471.3 520.2L473.4 527.2Q474.4 530.5 471.5 532.4L462.4 538.3Q459.5 540.2 456.0 540.9L442.3 543.5Q438.8 544.2 436.5 541.6Z" fill="none" stroke="#1cb6f5" stroke-width="5.0"/></g></g><clipPath id="h92"><path d="M543.3 524.9Q540.6 522.7 541.7 519.4L546.2 506.9Q547.4 503.6 550.5 505.3L577.2 519.6Q580.3 521.3 583.0 523.4L588.3 527.5Q591.0 529.5 587.7 530.6L578.1 534.0Q574.8 535.1 571.3 534.7L556.2 532.8Q552.7 532.3 550.0 530.2Z"/></clipPath><path d="M543.3 524.9Q540.6 522.7 541.7 519.4L546.2 506.9Q547.4 503.6 550.5 505.3L577.2 519.6Q580.3 521.3 583.0 523.4L588.3 527.5Q591.0 529.5 587.7 530.6L578.1 534.0Q574.8 535.1 571.3 534.7L556.2 532.8Q552.7 532.3 550.0 530.2Z" fill="url(#wall)" stroke="#d9b952" stroke-width="0.7"/><clipPath id="g92"><path d="M543.3 524.9Q540.6 522.7 541.7 519.4L546.2 506.9Q547.4 503.6 550.5 505.3L577.2 519.6Q580.3 521.3 583.0 523.4L588.3 527.5Q591.0 529.5 587.7 530.6L578.1 534.0Q574.8 535.1 571.3 534.7L556.2 532.8Q552.7 532.3 550.0 530.2Z" transform="translate(0,16)"/></clipPath><g clip-path="url(#h92)"><g clip-path="url(#g92)"><path d="M543.3 524.9Q540.6 522.7 541.7 519.4L546.2 506.9Q547.4 503.6 550.5 505.3L577.2 519.6Q580.3 521.3 583.0 523.4L588.3 527.5Q591.0 529.5 587.7 530.6L578.1 534.0Q574.8 535.1 571.3 534.7L556.2 532.8Q552.7 532.3 550.0 530.2Z" transform="translate(0,16)" fill="#626262" stroke="#1cb6f5" stroke-width="5.0"/><path d="M543.3 524.9Q540.6 522.7 541.7 519.4L546.2 506.9Q547.4 503.6 550.5 505.3L577.2 519.6Q580.3 521.3 583.0 523.4L588.3 527.5Q591.0 529.5 587.7 530.6L578.1 534.0Q574.8 535.1 571.3 534.7L556.2 532.8Q552.7 532.3 550.0 530.2Z" fill="none" stroke="#1cb6f5" stroke-width="5.0"/></g></g><clipPath id="h93"><path d="M448.1 546.5Q445.7 543.9 449.2 543.5L479.0 540.1Q482.5 539.7 484.8 542.3L491.1 549.4Q493.4 552.1 491.7 555.1L487.0 562.8Q485.3 565.8 481.8 566.4L472.2 568.0Q468.7 568.6 466.3 566.0Z"/></clipPath><path d="M448.1 546.5Q445.7 543.9 449.2 543.5L479.0 540.1Q482.5 539.7 484.8 542.3L491.1 549.4Q493.4 552.1 491.7 555.1L487.0 562.8Q485.3 565.8 481.8 566.4L472.2 568.0Q468.7 568.6 466.3 566.0Z" fill="url(#wall)" stroke="#d9b952" stroke-width="0.7"/><clipPath id="g93"><path d="M448.1 546.5Q445.7 543.9 449.2 543.5L479.0 540.1Q482.5 539.7 484.8 542.3L491.1 549.4Q493.4 552.1 491.7 555.1L487.0 562.8Q485.3 565.8 481.8 566.4L472.2 568.0Q468.7 568.6 466.3 566.0Z" transform="translate(0,16)"/></clipPath><g clip-path="url(#h93)"><g clip-path="url(#g93)"><path d="M448.1 546.5Q445.7 543.9 449.2 543.5L479.0 540.1Q482.5 539.7 484.8 542.3L491.1 549.4Q493.4 552.1 491.7 555.1L487.0 562.8Q485.3 565.8 481.8 566.4L472.2 568.0Q468.7 568.6 466.3 566.0Z" transform="translate(0,16)" fill="#626262" stroke="#1cb6f5" stroke-width="5.0"/><path d="M448.1 546.5Q445.7 543.9 449.2 543.5L479.0 540.1Q482.5 539.7 484.8 542.3L491.1 549.4Q493.4 552.1 491.7 555.1L487.0 562.8Q485.3 565.8 481.8 566.4L472.2 568.0Q468.7 568.6 466.3 566.0Z" fill="none" stroke="#1cb6f5" stroke-width="5.0"/></g></g><clipPath id="h94"><path d="M489.7 570.0Q487.1 567.7 489.1 564.8L497.4 552.7Q499.4 549.8 502.9 549.4L515.1 547.7Q518.6 547.2 518.3 550.7L516.3 572.5Q516.0 576.0 513.9 578.4L509.7 583.1Q507.7 585.5 505.0 583.2Z"/></clipPath><path d="M489.7 570.0Q487.1 567.7 489.1 564.8L497.4 552.7Q499.4 549.8 502.9 549.4L515.1 547.7Q518.6 547.2 518.3 550.7L516.3 572.5Q516.0 576.0 513.9 578.4L509.7 583.1Q507.7 585.5 505.0 583.2Z" fill="url(#wall)" stroke="#d9b952" stroke-width="0.7"/><clipPath id="g94"><path d="M489.7 570.0Q487.1 567.7 489.1 564.8L497.4 552.7Q499.4 549.8 502.9 549.4L515.1 547.7Q518.6 547.2 518.3 550.7L516.3 572.5Q516.0 576.0 513.9 578.4L509.7 583.1Q507.7 585.5 505.0 583.2Z" transform="translate(0,16)"/></clipPath><g clip-path="url(#h94)"><g clip-path="url(#g94)"><path d="M489.7 570.0Q487.1 567.7 489.1 564.8L497.4 552.7Q499.4 549.8 502.9 549.4L515.1 547.7Q518.6 547.2 518.3 550.7L516.3 572.5Q516.0 576.0 513.9 578.4L509.7 583.1Q507.7 585.5 505.0 583.2Z" transform="translate(0,16)" fill="#626262" stroke="#1cb6f5" stroke-width="5.0"/><path d="M489.7 570.0Q487.1 567.7 489.1 564.8L497.4 552.7Q499.4 549.8 502.9 549.4L515.1 547.7Q518.6 547.2 518.3 550.7L516.3 572.5Q516.0 576.0 513.9 578.4L509.7 583.1Q507.7 585.5 505.0 583.2Z" fill="none" stroke="#1cb6f5" stroke-width="5.0"/></g></g><clipPath id="h95"><path d="M518.7 580.8Q516.6 578.0 517.2 574.6L521.5 551.5Q522.2 548.0 524.9 549.4L530.3 552.0Q533.0 553.4 535.2 556.2L547.5 572.5Q549.6 575.3 549.6 578.8L549.5 588.2Q549.4 591.7 546.5 593.5L537.4 599.3Q534.4 601.2 532.3 598.4Z"/></clipPath><path d="M518.7 580.8Q516.6 578.0 517.2 574.6L521.5 551.5Q522.2 548.0 524.9 549.4L530.3 552.0Q533.0 553.4 535.2 556.2L547.5 572.5Q549.6 575.3 549.6 578.8L549.5 588.2Q549.4 591.7 546.5 593.5L537.4 599.3Q534.4 601.2 532.3 598.4Z" fill="url(#wall)" stroke="#d9b952" stroke-width="0.7"/><clipPath id="g95"><path d="M518.7 580.8Q516.6 578.0 517.2 574.6L521.5 551.5Q522.2 548.0 524.9 549.4L530.3 552.0Q533.0 553.4 535.2 556.2L547.5 572.5Q549.6 575.3 549.6 578.8L549.5 588.2Q549.4 591.7 546.5 593.5L537.4 599.3Q534.4 601.2 532.3 598.4Z" transform="translate(0,16)"/></clipPath><g clip-path="url(#h95)"><g clip-path="url(#g95)"><path d="M518.7 580.8Q516.6 578.0 517.2 574.6L521.5 551.5Q522.2 548.0 524.9 549.4L530.3 552.0Q533.0 553.4 535.2 556.2L547.5 572.5Q549.6 575.3 549.6 578.8L549.5 588.2Q549.4 591.7 546.5 593.5L537.4 599.3Q534.4 601.2 532.3 598.4Z" transform="translate(0,16)" fill="#626262" stroke="#1cb6f5" stroke-width="5.0"/><path d="M518.7 580.8Q516.6 578.0 517.2 574.6L521.5 551.5Q522.2 548.0 524.9 549.4L530.3 552.0Q533.0 553.4 535.2 556.2L547.5 572.5Q549.6 575.3 549.6 578.8L549.5 588.2Q549.4 591.7 546.5 593.5L537.4 599.3Q534.4 601.2 532.3 598.4Z" fill="none" stroke="#1cb6f5" stroke-width="5.0"/></g></g><clipPath id="h96"><path d="M538.5 552.6Q535.5 550.9 537.6 548.1L542.9 541.3Q545.0 538.5 548.5 539.1L566.3 542.0Q569.8 542.6 571.8 545.5L577.3 553.5Q579.2 556.4 577.6 557.4L574.2 559.5Q572.5 560.5 569.0 560.1L551.1 558.2Q547.6 557.8 544.6 556.1Z"/></clipPath><path d="M538.5 552.6Q535.5 550.9 537.6 548.1L542.9 541.3Q545.0 538.5 548.5 539.1L566.3 542.0Q569.8 542.6 571.8 545.5L577.3 553.5Q579.2 556.4 577.6 557.4L574.2 559.5Q572.5 560.5 569.0 560.1L551.1 558.2Q547.6 557.8 544.6 556.1Z" fill="url(#wall)" stroke="#d9b952" stroke-width="0.7"/><clipPath id="g96"><path d="M538.5 552.6Q535.5 550.9 537.6 548.1L542.9 541.3Q545.0 538.5 548.5 539.1L566.3 542.0Q569.8 542.6 571.8 545.5L577.3 553.5Q579.2 556.4 577.6 557.4L574.2 559.5Q572.5 560.5 569.0 560.1L551.1 558.2Q547.6 557.8 544.6 556.1Z" transform="translate(0,16)"/></clipPath><g clip-path="url(#h96)"><g clip-path="url(#g96)"><path d="M538.5 552.6Q535.5 550.9 537.6 548.1L542.9 541.3Q545.0 538.5 548.5 539.1L566.3 542.0Q569.8 542.6 571.8 545.5L577.3 553.5Q579.2 556.4 577.6 557.4L574.2 559.5Q572.5 560.5 569.0 560.1L551.1 558.2Q547.6 557.8 544.6 556.1Z" transform="translate(0,16)" fill="#626262" stroke="#1cb6f5" stroke-width="5.0"/><path d="M538.5 552.6Q535.5 550.9 537.6 548.1L542.9 541.3Q545.0 538.5 548.5 539.1L566.3 542.0Q569.8 542.6 571.8 545.5L577.3 553.5Q579.2 556.4 577.6 557.4L574.2 559.5Q572.5 560.5 569.0 560.1L551.1 558.2Q547.6 557.8 544.6 556.1Z" fill="none" stroke="#1cb6f5" stroke-width="5.0"/></g></g><clipPath id="h97"><path d="M578.7 545.1Q576.7 542.3 579.9 541.1L588.4 538.0Q591.7 536.8 593.6 539.7L603.6 554.4Q605.6 557.3 606.2 560.8L608.8 575.7Q609.4 579.1 606.5 577.2L600.1 573.0Q597.1 571.1 595.1 568.3Z"/></clipPath><path d="M578.7 545.1Q576.7 542.3 579.9 541.1L588.4 538.0Q591.7 536.8 593.6 539.7L603.6 554.4Q605.6 557.3 606.2 560.8L608.8 575.7Q609.4 579.1 606.5 577.2L600.1 573.0Q597.1 571.1 595.1 568.3Z" fill="url(#wall)" stroke="#d9b952" stroke-width="0.7"/><clipPath id="g97"><path d="M578.7 545.1Q576.7 542.3 579.9 541.1L588.4 538.0Q591.7 536.8 593.6 539.7L603.6 554.4Q605.6 557.3 606.2 560.8L608.8 575.7Q609.4 579.1 606.5 577.2L600.1 573.0Q597.1 571.1 595.1 568.3Z" transform="translate(0,16)"/></clipPath><g clip-path="url(#h97)"><g clip-path="url(#g97)"><path d="M578.7 545.1Q576.7 542.3 579.9 541.1L588.4 538.0Q591.7 536.8 593.6 539.7L603.6 554.4Q605.6 557.3 606.2 560.8L608.8 575.7Q609.4 579.1 606.5 577.2L600.1 573.0Q597.1 571.1 595.1 568.3Z" transform="translate(0,16)" fill="#626262" stroke="#1cb6f5" stroke-width="5.0"/><path d="M578.7 545.1Q576.7 542.3 579.9 541.1L588.4 538.0Q591.7 536.8 593.6 539.7L603.6 554.4Q605.6 557.3 606.2 560.8L608.8 575.7Q609.4 579.1 606.5 577.2L600.1 573.0Q597.1 571.1 595.1 568.3Z" fill="none" stroke="#1cb6f5" stroke-width="5.0"/></g></g><clipPath id="h98"><path d="M596.0 533.6Q593.5 531.2 596.9 530.8L603.8 530.1Q607.2 529.7 609.6 532.3L617.4 541.1Q619.7 543.7 617.6 544.7L613.5 546.8Q611.4 547.9 608.9 545.5Z"/></clipPath><path d="M596.0 533.6Q593.5 531.2 596.9 530.8L603.8 530.1Q607.2 529.7 609.6 532.3L617.4 541.1Q619.7 543.7 617.6 544.7L613.5 546.8Q611.4 547.9 608.9 545.5Z" fill="url(#wall)" stroke="#d9b952" stroke-width="0.7"/><clipPath id="g98"><path d="M596.0 533.6Q593.5 531.2 596.9 530.8L603.8 530.1Q607.2 529.7 609.6 532.3L617.4 541.1Q619.7 543.7 617.6 544.7L613.5 546.8Q611.4 547.9 608.9 545.5Z" transform="translate(0,16)"/></clipPath><g clip-path="url(#h98)"><g clip-path="url(#g98)"><path d="M596.0 533.6Q593.5 531.2 596.9 530.8L603.8 530.1Q607.2 529.7 609.6 532.3L617.4 541.1Q619.7 543.7 617.6 544.7L613.5 546.8Q611.4 547.9 608.9 545.5Z" transform="translate(0,16)" fill="#626262" stroke="#1cb6f5" stroke-width="5.0"/><path d="M596.0 533.6Q593.5 531.2 596.9 530.8L603.8 530.1Q607.2 529.7 609.6 532.3L617.4 541.1Q619.7 543.7 617.6 544.7L613.5 546.8Q611.4 547.9 608.9 545.5Z" fill="none" stroke="#1cb6f5" stroke-width="5.0"/></g></g><clipPath id="h99"><path d="M612.4 570.4Q610.0 567.9 610.5 564.5L612.1 554.9Q612.7 551.4 616.1 550.4L623.1 548.3Q626.4 547.3 629.5 549.0L639.9 555.2Q642.9 556.9 643.3 559.7L644.0 565.2Q644.3 567.9 641.5 570.1L627.8 580.8Q625.1 583.0 622.6 580.5Z"/></clipPath><path d="M612.4 570.4Q610.0 567.9 610.5 564.5L612.1 554.9Q612.7 551.4 616.1 550.4L623.1 548.3Q626.4 547.3 629.5 549.0L639.9 555.2Q642.9 556.9 643.3 559.7L644.0 565.2Q644.3 567.9 641.5 570.1L627.8 580.8Q625.1 583.0 622.6 580.5Z" fill="url(#wall)" stroke="#d9b952" stroke-width="0.7"/><clipPath id="g99"><path d="M612.4 570.4Q610.0 567.9 610.5 564.5L612.1 554.9Q612.7 551.4 616.1 550.4L623.1 548.3Q626.4 547.3 629.5 549.0L639.9 555.2Q642.9 556.9 643.3 559.7L644.0 565.2Q644.3 567.9 641.5 570.1L627.8 580.8Q625.1 583.0 622.6 580.5Z" transform="translate(0,16)"/></clipPath><g clip-path="url(#h99)"><g clip-path="url(#g99)"><path d="M612.4 570.4Q610.0 567.9 610.5 564.5L612.1 554.9Q612.7 551.4 616.1 550.4L623.1 548.3Q626.4 547.3 629.5 549.0L639.9 555.2Q642.9 556.9 643.3 559.7L644.0 565.2Q644.3 567.9 641.5 570.1L627.8 580.8Q625.1 583.0 622.6 580.5Z" transform="translate(0,16)" fill="#626262" stroke="#1cb6f5" stroke-width="5.0"/><path d="M612.4 570.4Q610.0 567.9 610.5 564.5L612.1 554.9Q612.7 551.4 616.1 550.4L623.1 548.3Q626.4 547.3 629.5 549.0L639.9 555.2Q642.9 556.9 643.3 559.7L644.0 565.2Q644.3 567.9 641.5 570.1L627.8 580.8Q625.1 583.0 622.6 580.5Z" fill="none" stroke="#1cb6f5" stroke-width="5.0"/></g></g><clipPath id="h100"><path d="M635.7 584.1Q633.0 582.0 635.2 579.3L645.8 566.7Q648.1 564.0 651.2 565.0L657.4 567.1Q660.5 568.2 660.9 570.6L661.6 575.4Q662.0 577.8 659.5 580.3L649.2 590.5Q646.7 593.0 644.0 590.8Z"/></clipPath><path d="M635.7 584.1Q633.0 582.0 635.2 579.3L645.8 566.7Q648.1 564.0 651.2 565.0L657.4 567.1Q660.5 568.2 660.9 570.6L661.6 575.4Q662.0 577.8 659.5 580.3L649.2 590.5Q646.7 593.0 644.0 590.8Z" fill="url(#wall)" stroke="#d9b952" stroke-width="0.7"/><clipPath id="g100"><path d="M635.7 584.1Q633.0 582.0 635.2 579.3L645.8 566.7Q648.1 564.0 651.2 565.0L657.4 567.1Q660.5 568.2 660.9 570.6L661.6 575.4Q662.0 577.8 659.5 580.3L649.2 590.5Q646.7 593.0 644.0 590.8Z" transform="translate(0,16)"/></clipPath><g clip-path="url(#h100)"><g clip-path="url(#g100)"><path d="M635.7 584.1Q633.0 582.0 635.2 579.3L645.8 566.7Q648.1 564.0 651.2 565.0L657.4 567.1Q660.5 568.2 660.9 570.6L661.6 575.4Q662.0 577.8 659.5 580.3L649.2 590.5Q646.7 593.0 644.0 590.8Z" transform="translate(0,16)" fill="#626262" stroke="#1cb6f5" stroke-width="5.0"/><path d="M635.7 584.1Q633.0 582.0 635.2 579.3L645.8 566.7Q648.1 564.0 651.2 565.0L657.4 567.1Q660.5 568.2 660.9 570.6L661.6 575.4Q662.0 577.8 659.5 580.3L649.2 590.5Q646.7 593.0 644.0 590.8Z" fill="none" stroke="#1cb6f5" stroke-width="5.0"/></g></g><clipPath id="h101"><path d="M552.3 582.1Q550.6 580.4 553.0 577.8L565.9 563.8Q568.3 561.2 571.4 562.8L598.0 576.1Q601.1 577.6 601.8 579.0L603.1 581.7Q603.8 583.1 600.4 584.1L588.2 587.7Q584.9 588.7 581.4 588.5L560.9 587.4Q557.4 587.2 555.7 585.5Z"/></clipPath><path d="M552.3 582.1Q550.6 580.4 553.0 577.8L565.9 563.8Q568.3 561.2 571.4 562.8L598.0 576.1Q601.1 577.6 601.8 579.0L603.1 581.7Q603.8 583.1 600.4 584.1L588.2 587.7Q584.9 588.7 581.4 588.5L560.9 587.4Q557.4 587.2 555.7 585.5Z" fill="url(#wall)" stroke="#d9b952" stroke-width="0.7"/><clipPath id="g101"><path d="M552.3 582.1Q550.6 580.4 553.0 577.8L565.9 563.8Q568.3 561.2 571.4 562.8L598.0 576.1Q601.1 577.6 601.8 579.0L603.1 581.7Q603.8 583.1 600.4 584.1L588.2 587.7Q584.9 588.7 581.4 588.5L560.9 587.4Q557.4 587.2 555.7 585.5Z" transform="translate(0,16)"/></clipPath><g clip-path="url(#h101)"><g clip-path="url(#g101)"><path d="M552.3 582.1Q550.6 580.4 553.0 577.8L565.9 563.8Q568.3 561.2 571.4 562.8L598.0 576.1Q601.1 577.6 601.8 579.0L603.1 581.7Q603.8 583.1 600.4 584.1L588.2 587.7Q584.9 588.7 581.4 588.5L560.9 587.4Q557.4 587.2 555.7 585.5Z" transform="translate(0,16)" fill="#626262" stroke="#1cb6f5" stroke-width="5.0"/><path d="M552.3 582.1Q550.6 580.4 553.0 577.8L565.9 563.8Q568.3 561.2 571.4 562.8L598.0 576.1Q601.1 577.6 601.8 579.0L603.1 581.7Q603.8 583.1 600.4 584.1L588.2 587.7Q584.9 588.7 581.4 588.5L560.9 587.4Q557.4 587.2 555.7 585.5Z" fill="none" stroke="#1cb6f5" stroke-width="5.0"/></g></g><clipPath id="h102"><path d="M544.1 603.0Q541.7 600.5 544.6 598.6L555.0 591.5Q557.9 589.5 561.4 590.0L592.7 594.6Q596.1 595.1 595.5 598.1L594.1 604.3Q593.5 607.3 590.6 609.3L574.5 620.5Q571.6 622.5 568.5 620.9L558.3 615.8Q555.1 614.2 552.7 611.7Z"/></clipPath><path d="M544.1 603.0Q541.7 600.5 544.6 598.6L555.0 591.5Q557.9 589.5 561.4 590.0L592.7 594.6Q596.1 595.1 595.5 598.1L594.1 604.3Q593.5 607.3 590.6 609.3L574.5 620.5Q571.6 622.5 568.5 620.9L558.3 615.8Q555.1 614.2 552.7 611.7Z" fill="url(#wall)" stroke="#d9b952" stroke-width="0.7"/><clipPath id="g102"><path d="M544.1 603.0Q541.7 600.5 544.6 598.6L555.0 591.5Q557.9 589.5 561.4 590.0L592.7 594.6Q596.1 595.1 595.5 598.1L594.1 604.3Q593.5 607.3 590.6 609.3L574.5 620.5Q571.6 622.5 568.5 620.9L558.3 615.8Q555.1 614.2 552.7 611.7Z" transform="translate(0,16)"/></clipPath><g clip-path="url(#h102)"><g clip-path="url(#g102)"><path d="M544.1 603.0Q541.7 600.5 544.6 598.6L555.0 591.5Q557.9 589.5 561.4 590.0L592.7 594.6Q596.1 595.1 595.5 598.1L594.1 604.3Q593.5 607.3 590.6 609.3L574.5 620.5Q571.6 622.5 568.5 620.9L558.3 615.8Q555.1 614.2 552.7 611.7Z" transform="translate(0,16)" fill="#626262" stroke="#1cb6f5" stroke-width="5.0"/><path d="M544.1 603.0Q541.7 600.5 544.6 598.6L555.0 591.5Q557.9 589.5 561.4 590.0L592.7 594.6Q596.1 595.1 595.5 598.1L594.1 604.3Q593.5 607.3 590.6 609.3L574.5 620.5Q571.6 622.5 568.5 620.9L558.3 615.8Q555.1 614.2 552.7 611.7Z" fill="none" stroke="#1cb6f5" stroke-width="5.0"/></g></g><clipPath id="h103"><path d="M599.6 606.6Q598.3 603.3 599.9 600.2L605.0 590.0Q606.6 586.9 610.0 587.6L630.5 591.7Q634.0 592.4 635.0 594.4L637.0 598.5Q638.1 600.6 635.3 602.7L623.1 612.3Q620.3 614.5 617.6 616.6L609.4 623.0Q606.6 625.2 605.4 621.9Z"/></clipPath><path d="M599.6 606.6Q598.3 603.3 599.9 600.2L605.0 590.0Q606.6 586.9 610.0 587.6L630.5 591.7Q634.0 592.4 635.0 594.4L637.0 598.5Q638.1 600.6 635.3 602.7L623.1 612.3Q620.3 614.5 617.6 616.6L609.4 623.0Q606.6 625.2 605.4 621.9Z" fill="url(#wall)" stroke="#d9b952" stroke-width="0.7"/><clipPath id="g103"><path d="M599.6 606.6Q598.3 603.3 599.9 600.2L605.0 590.0Q606.6 586.9 610.0 587.6L630.5 591.7Q634.0 592.4 635.0 594.4L637.0 598.5Q638.1 600.6 635.3 602.7L623.1 612.3Q620.3 614.5 617.6 616.6L609.4 623.0Q606.6 625.2 605.4 621.9Z" transform="translate(0,16)"/></clipPath><g clip-path="url(#h103)"><g clip-path="url(#g103)"><path d="M599.6 606.6Q598.3 603.3 599.9 600.2L605.0 590.0Q606.6 586.9 610.0 587.6L630.5 591.7Q634.0 592.4 635.0 594.4L637.0 598.5Q638.1 600.6 635.3 602.7L623.1 612.3Q620.3 614.5 617.6 616.6L609.4 623.0Q606.6 625.2 605.4 621.9Z" transform="translate(0,16)" fill="#626262" stroke="#1cb6f5" stroke-width="5.0"/><path d="M599.6 606.6Q598.3 603.3 599.9 600.2L605.0 590.0Q606.6 586.9 610.0 587.6L630.5 591.7Q634.0 592.4 635.0 594.4L637.0 598.5Q638.1 600.6 635.3 602.7L623.1 612.3Q620.3 614.5 617.6 616.6L609.4 623.0Q606.6 625.2 605.4 621.9Z" fill="none" stroke="#1cb6f5" stroke-width="5.0"/></g></g><clipPath id="h104"><path d="M575.3 628.8Q572.8 626.3 575.7 624.2L589.2 614.5Q592.1 612.5 594.2 614.9L598.4 619.7Q600.4 622.1 600.1 625.6L599.3 633.9Q599.0 637.3 595.9 638.0L589.7 639.4Q586.6 640.1 584.1 637.6Z"/></clipPath><path d="M575.3 628.8Q572.8 626.3 575.7 624.2L589.2 614.5Q592.1 612.5 594.2 614.9L598.4 619.7Q600.4 622.1 600.1 625.6L599.3 633.9Q599.0 637.3 595.9 638.0L589.7 639.4Q586.6 640.1 584.1 637.6Z" fill="url(#wall)" stroke="#d9b952" stroke-width="0.7"/><clipPath id="g104"><path d="M575.3 628.8Q572.8 626.3 575.7 624.2L589.2 614.5Q592.1 612.5 594.2 614.9L598.4 619.7Q600.4 622.1 600.1 625.6L599.3 633.9Q599.0 637.3 595.9 638.0L589.7 639.4Q586.6 640.1 584.1 637.6Z" transform="translate(0,16)"/></clipPath><g clip-path="url(#h104)"><g clip-path="url(#g104)"><path d="M575.3 628.8Q572.8 626.3 575.7 624.2L589.2 614.5Q592.1 612.5 594.2 614.9L598.4 619.7Q600.4 622.1 600.1 625.6L599.3 633.9Q599.0 637.3 595.9 638.0L589.7 639.4Q586.6 640.1 584.1 637.6Z" transform="translate(0,16)" fill="#626262" stroke="#1cb6f5" stroke-width="5.0"/><path d="M575.3 628.8Q572.8 626.3 575.7 624.2L589.2 614.5Q592.1 612.5 594.2 614.9L598.4 619.7Q600.4 622.1 600.1 625.6L599.3 633.9Q599.0 637.3 595.9 638.0L589.7 639.4Q586.6 640.1 584.1 637.6Z" fill="none" stroke="#1cb6f5" stroke-width="5.0"/></g></g>
<line x1="570.5" y1="133.8" x2="274.8" y2="0.0" stroke="#18a4dc" stroke-width="1.1" />
<line x1="570.5" y1="133.8" x2="789.4" y2="0.0" stroke="#18a4dc" stroke-width="1.1" />
<line x1="570.5" y1="133.8" x2="563.2" y2="830.5" stroke="#18a4dc" stroke-width="1.1" />
<line x1="72.0" y1="453.0" x2="0.0" y2="95.0" stroke="#18a4dc" stroke-width="1.1" />
<line x1="989.7" y1="434.2" x2="1040.0" y2="168.5" stroke="#18a4dc" stroke-width="1.1" />
<line x1="79.5" y1="493.0" x2="72.3" y2="453.5" stroke="#6262ee" stroke-width="5.2" stroke-linecap="butt"/>
<line x1="82.0" y1="491.5" x2="122.0" y2="467.5" stroke="#10f010" stroke-width="4.6" />
<line x1="80.0" y1="494.5" x2="115.5" y2="517.0" stroke="#f01010" stroke-width="4.6" />
<line x1="546.5" y1="560.0" x2="546.3" y2="405.0" stroke="#5252c2" stroke-width="3.6" /><polygon points="545.8,380.5 534.5,409.5 557.2,407.8" fill="#5252c2" /><line x1="546.5" y1="560.0" x2="406.0" y2="673.0" stroke="#0dba0d" stroke-width="3.8" /><polygon points="383.5,690.5 402.5,662.5 414.0,680.5" fill="#0dba0d" /><line x1="546.5" y1="560.0" x2="703.0" y2="657.0" stroke="#c01414" stroke-width="3.8" /><polygon points="731.6,673.0 706.7,646.7 698.3,665.0" fill="#c01414" />
</svg>
<div id="panel">
  <div id="phead"><span class="t" style="letter-spacing:0.087px">Print settings</span>
    <svg class="x" width="12" height="12" viewBox="0 0 12 12"><path d="M1.5 1.5 L10.5 10.5 M10.5 1.5 L1.5 10.5" stroke="#e6e6e6" stroke-width="2.4" fill="none"/></svg>
  </div>
  <div id="profile"><span class="lbl" style="letter-spacing:-0.076px">Profile</span>
    <div class="dd"><span style="letter-spacing:0.039px">MyQuality - Super Quality - 0.12mm</span>
      <svg class="star" width="14" height="14" viewBox="0 0 14 14"><path d="M7 0.6 L8.9 5 L13.6 5.4 L10 8.5 L11.1 13.2 L7 10.7 L2.9 13.2 L4 8.5 L0.4 5.4 L5.1 5 Z" fill="#9a9d9f"/></svg>
      <svg class="chev" width="14" height="9" viewBox="0 0 14 9"><path d="M1.5 1.5 L7 7 L12.5 1.5" stroke="#9a9d9f" stroke-width="1.5" fill="none"/></svg>
    </div>
  </div>
  <div id="search"><svg width="16" height="16" viewBox="0 0 16 16"><circle cx="6.5" cy="6.5" r="5" stroke="#c8c9ca" stroke-width="1.5" fill="none"/><path d="M10.2 10.2 L14.8 14.8" stroke="#c8c9ca" stroke-width="2"/></svg><span style="letter-spacing:-0.495px">Search settings</span></div>
  <svg id="burger" width="12.4" height="11" viewBox="0 0 13 11" preserveAspectRatio="none"><path d="M0 1.2 H13 M0 5.5 H13 M0 9.8 H13" stroke="#e8e8e8" stroke-width="1.9"/></svg>
  <div id="list"><div id="listin">
  <div class="row" style="top:-12px"><span class="l i" style="letter-spacing:-0.289px;left:9px">Initial Layer Flow</span><div class="box"><span class="v" style="letter-spacing:-0.370px">96.5</span><span class="u">%</span></div></div>
<div class="hdr" style="top:13px"><svg class="hi" width="18" height="18" viewBox="0 0 18 18"><circle cx="9" cy="9" r="7.6" stroke="#a4a7a9" stroke-width="1" fill="none"/><path d="M9 9 L11.6 5.2" stroke="#a4a7a9" stroke-width="1.3"/><path d="M9 1.6 V3.6 M3.8 3.8 L5 5 M14.2 3.8 L13 5 M1.6 9 H3.4 M14.6 9 H16.4" stroke="#a4a7a9" stroke-width="0.8"/></svg><span class="l" style="letter-spacing:0.489px">Speed</span><svg class="ch" width="14" height="9" viewBox="0 0 14 9"><path d="M1.5 1.5 L7 7 L12.5 1.5" stroke="#9c9fa1" stroke-width="1.5" fill="none"/></svg></div>
<div class="row" style="top:40px"><span class="l" style="letter-spacing:-0.054px;left:9px">Print Speed</span><div class="box"><span class="v" style="letter-spacing:-0.370px">50.0</span><span class="u" style="letter-spacing:0.014px">mm/s</span></div></div>
<div class="row" style="top:66px"><span class="l" style="letter-spacing:0.077px;left:26px">Infill Speed</span><div class="box"><span class="v" style="letter-spacing:-0.370px">50.0</span><span class="u" style="letter-spacing:0.014px">mm/s</span></div></div>
<div class="row" style="top:92px"><span class="l" style="letter-spacing:-0.246px;left:26px">Wall Speed</span><div class="box"><span class="v" style="letter-spacing:-0.370px">25.0</span><span class="u" style="letter-spacing:0.014px">mm/s</span></div></div>
<div class="row" style="top:118px"><span class="l i" style="letter-spacing:-0.562px;left:43px">Outer Wall Speed</span><svg class="ic" style="left:238px" width="14" height="14" viewBox="0 0 14 14"><path d="M3.2 4.2 A5 5 0 1 1 4.4 11.6" stroke="#a9acae" stroke-width="1.5" fill="none"/><path d="M0.8 2.2 L5.6 2.6 L2.4 6.6 Z" fill="#a9acae"/></svg><div class="box"><span class="v" style="letter-spacing:-0.370px">25.0</span><span class="u" style="letter-spacing:0.014px">mm/s</span></div></div>
<div class="row" style="top:144px"><span class="l i" style="letter-spacing:-0.533px;left:43px">Inner Wall Speed</span><svg class="ic" style="left:238px" width="14" height="14" viewBox="0 0 14 14"><circle cx="7" cy="7" r="6.4" fill="#9da0a2"/><text x="6.2" y="10.6" text-anchor="middle" font-family="Liberation Serif, serif" font-style="italic" font-size="10" fill="#272c30">f</text><text x="9.6" y="11" text-anchor="middle" font-family="Liberation Sans, sans-serif" font-size="5" fill="#272c30">x</text></svg><div class="box"><span class="v" style="letter-spacing:-0.370px">55.0</span><span class="u" style="letter-spacing:0.014px">mm/s</span></div></div>
<div class="row" style="top:170px"><span class="l" style="letter-spacing:0.069px;left:26px">Top/Bottom Speed</span><div class="box"><span class="v" style="letter-spacing:-0.370px">25.0</span><span class="u" style="letter-spacing:0.014px">mm/s</span></div></div>
<div class="row" style="top:196px"><span class="l" style="letter-spacing:-0.286px;left:9px">Travel Speed</span><div class="box"><span class="v" style="letter-spacing:-0.383px">150.0</span><span class="u" style="letter-spacing:0.014px">mm/s</span></div></div>
<div class="row" style="top:222px"><span class="l" style="letter-spacing:0.024px;left:9px">Initial Layer Speed</span><div class="box"><span class="v" style="letter-spacing:-0.370px">20.0</span><span class="u" style="letter-spacing:0.014px">mm/s</span></div></div>
<div class="hdr" style="top:247px"><svg class="hi" width="18" height="18" viewBox="0 0 18 18"><path d="M10.5 1.3 H18 V3.5 C18 5.5 16 6.8 14.2 7 C12.4 6.8 10.5 5.5 10.5 3.5 Z" fill="#b4b7b9"/><path d="M12.5 9.3 H15.5" stroke="#a4a7a9" stroke-width="1"/><path d="M4.5 12.3 H15 M3.3 14.4 H16 M2 16.6 H17" stroke="#a4a7a9" stroke-width="0.8"/></svg><span class="l" style="letter-spacing:0.722px">Travel</span><svg class="ch" style="left:372px;top:5.6px" width="9" height="14" viewBox="0 0 9 14"><path d="M7 1.5 L1.5 7 L7 12.5" stroke="#a4a7a9" stroke-width="1.5" fill="none"/></svg></div>
<div class="hdr" style="top:273px"><svg class="hi" width="18" height="18" viewBox="0 0 18 18"><g stroke="#b4b7b9" stroke-width="1.3" fill="none"><path d="M9 9 C8 6 9 3 11 1.5"/><path d="M9 9 C11.5 7.5 14 7.5 16.5 9"/><path d="M9 9 C11 11 12 14 11 16.5"/><path d="M9 9 C7 11.5 4.5 12.5 1.8 11.5"/><path d="M9 9 C6 9 3.5 7 2.5 4.5"/><path d="M9 9 C9.5 6 12 4 14.5 3.5"/><path d="M9 9 C12 10 14 12 14.5 14.5"/><path d="M9 9 C8.5 12 7 14.5 5 16"/></g></svg><span class="l" style="letter-spacing:0.744px">Cooling</span><svg class="ch" style="left:372px;top:5.6px" width="9" height="14" viewBox="0 0 9 14"><path d="M7 1.5 L1.5 7 L7 12.5" stroke="#a4a7a9" stroke-width="1.5" fill="none"/></svg></div>
<div class="hdr" style="top:299px"><svg class="hi" width="18" height="18" viewBox="0 0 18 18"><path d="M2 10 H5 V4.5 H8.5 V10 H11 V16.5 H2 Z" fill="#b4b7b9"/><path d="M5.5 1.5 H15 C14 5 14.5 10 16.5 13.5 H11" stroke="#a4a7a9" stroke-width="0.9" fill="none"/></svg><span class="l" style="letter-spacing:0.888px">Support</span><svg class="ch" width="14" height="9" viewBox="0 0 14 9"><path d="M1.5 1.5 L7 7 L12.5 1.5" stroke="#9c9fa1" stroke-width="1.5" fill="none"/></svg></div>
<div class="row" style="top:326px"><span class="l i" style="letter-spacing:-0.617px;left:9px">Generate Support</span><svg class="ic" style="left:217px" width="14" height="14" viewBox="0 0 14 14"><g stroke="#a9acae" stroke-width="1.5" fill="none"><rect x="6.6" y="1.4" width="6" height="4.2" rx="2.1" transform="rotate(-40 9.6 3.5)"/><rect x="1.4" y="8.2" width="6" height="4.2" rx="2.1" transform="rotate(-40 4.4 10.3)"/><path d="M5.2 8.8 L8.8 5.2"/></g></svg><svg class="ic" style="left:238px" width="14" height="14" viewBox="0 0 14 14"><path d="M3.2 4.2 A5 5 0 1 1 4.4 11.6" stroke="#a9acae" stroke-width="1.5" fill="none"/><path d="M0.8 2.2 L5.6 2.6 L2.4 6.6 Z" fill="#a9acae"/></svg><div class="cb"></div></div>
<div class="hdr" style="top:351px"><svg class="hi" width="18" height="18" viewBox="0 0 18 18"><path d="M2.5 7.9 C6 7.2 12 7.2 15.5 7.9 M2.5 10.4 H15.5" stroke="#b4b7b9" stroke-width="0.9" fill="none"/><path d="M9 1.5 V5 M9 17 V13.5" stroke="#b4b7b9" stroke-width="0.9"/><path d="M7.3 3.6 L9 6.2 L10.7 3.6 Z M7.3 14.9 L9 12.3 L10.7 14.9 Z" fill="#b4b7b9"/></svg><span class="l" style="letter-spacing:0.826px">Build Plate Adhesion</span><svg class="ch" width="14" height="9" viewBox="0 0 14 9"><path d="M1.5 1.5 L7 7 L12.5 1.5" stroke="#9c9fa1" stroke-width="1.5" fill="none"/></svg></div>
<div class="row" style="top:378px"><span class="l i" style="letter-spacing:-0.468px;left:9px">Build Plate Adhesion Type</span><svg class="ic" style="left:238px" width="14" height="14" viewBox="0 0 14 14"><g stroke="#a9acae" stroke-width="1.5" fill="none"><rect x="6.6" y="1.4" width="6" height="4.2" rx="2.1" transform="rotate(-40 9.6 3.5)"/><rect x="1.4" y="8.2" width="6" height="4.2" rx="2.1" transform="rotate(-40 4.4 10.3)"/><path d="M5.2 8.8 L8.8 5.2"/></g></svg><div class="box"><span class="v" style="letter-spacing:-0.005px;top:5px">None</span><svg width="14" height="9" viewBox="0 0 14 9"><path d="M1.5 1.5 L7 7 L12.5 1.5" stroke="#a6a9ab" stroke-width="1.5" fill="none"/></svg></div></div>
<div class="hdr" style="top:403px"><svg class="hi" width="18" height="18" viewBox="0 0 18 18"><path d="M9.3 2 H14.8 C14.5 5 13 6 13.1 7.5 C13.3 10 16 13 17 16.5 H9.3 Z" fill="#a9acae"/><path d="M3.7 2 H14.8 C14.5 5 13 6 13.1 7.5 C13.3 10 16 13 17 16.5 H2 C3 13 5.3 10 5.4 7.5 C5.5 6 4 5 3.7 2 Z" stroke="#a4a7a9" stroke-width="0.8" fill="none"/><path d="M9.3 0.5 V17.8" stroke="#a4a7a9" stroke-width="0.8"/></svg><span class="l" style="letter-spacing:0.765px">Dual Extrusion</span><svg class="ch" width="14" height="9" viewBox="0 0 14 9"><path d="M1.5 1.5 L7 7 L12.5 1.5" stroke="#9c9fa1" stroke-width="1.5" fill="none"/></svg></div>
<div class="hdr" style="top:429px"><svg class="hi" width="18" height="18" viewBox="0 0 18 18"><path d="M3.7 2 H14.8 C14.5 5 13 6 13.1 7.5 C13.3 10 16 13 17 16.5 H2 C3 13 5.3 10 5.4 7.5 C5.5 6 4 5 3.7 2 Z" stroke="#a4a7a9" stroke-width="0.9" fill="none"/><path d="M6 9 L11 8 L8.5 11 L13 13.5" stroke="#a4a7a9" stroke-width="0.9" fill="none"/></svg><span class="l" style="letter-spacing:0.549px">Mesh Fixes</span><svg class="ch" width="14" height="9" viewBox="0 0 14 9"><path d="M1.5 1.5 L7 7 L12.5 1.5" stroke="#9c9fa1" stroke-width="1.5" fill="none"/></svg></div>
<div class="row" style="top:456px"><span class="l i" style="letter-spacing:-0.353px;left:9px">Maximum Resolution</span><div class="box"><span class="v" style="letter-spacing:-0.342px">0.5</span><span class="u" style="letter-spacing:-0.014px">mm</span></div></div>
<div class="row" style="top:482px"><span class="l i" style="letter-spacing:-0.393px;left:9px">Maximum Travel Resolution</span><svg class="ic" style="left:238px" width="14" height="14" viewBox="0 0 14 14"><circle cx="7" cy="7" r="6.4" fill="#9da0a2"/><text x="6.2" y="10.6" text-anchor="middle" font-family="Liberation Serif, serif" font-style="italic" font-size="10" fill="#272c30">f</text><text x="9.6" y="11" text-anchor="middle" font-family="Liberation Sans, sans-serif" font-size="5" fill="#272c30">x</text></svg><div class="box"><span class="v" style="letter-spacing:-0.342px">0.5</span><span class="u" style="letter-spacing:-0.014px">mm</span></div></div>
<div class="row" style="top:508px"><span class="l i" style="letter-spacing:-0.276px;left:9px">Maximum Deviation</span><div class="box"><span class="v" style="letter-spacing:-0.370px">0.05</span><span class="u" style="letter-spacing:-0.014px">mm</span></div></div>
<div class="hdr" style="top:533px"><svg class="hi" width="18" height="18" viewBox="0 0 18 18"><path d="M3.7 2 H14.8 C14.5 5 13 6 13.1 7.5 C13.3 10 16 13 17 16.5 H2 C3 13 5.3 10 5.4 7.5 C5.5 6 4 5 3.7 2 Z" stroke="#a4a7a9" stroke-width="0.9" fill="none"/><path d="M7.2 6 C7.5 3.8 11.6 3.8 11.4 6.4 C11.3 8.2 9.3 8.2 9.3 10.4" stroke="#b4b7b9" stroke-width="1.2" fill="none"/><circle cx="9.3" cy="13" r="0.9" fill="#b4b7b9"/></svg><span class="l" style="letter-spacing:0.700px">Special Modes</span><svg class="ch" width="14" height="9" viewBox="0 0 14 9"><path d="M1.5 1.5 L7 7 L12.5 1.5" stroke="#9c9fa1" stroke-width="1.5" fill="none"/></svg></div>
<div class="row" style="top:560px"><span class="l" style="letter-spacing:-0.042px;left:9px">Print Sequence</span><svg class="ic" style="left:238px" width="14" height="14" viewBox="0 0 14 14"><g stroke="#a9acae" stroke-width="1.5" fill="none"><rect x="6.6" y="1.4" width="6" height="4.2" rx="2.1" transform="rotate(-40 9.6 3.5)"/><rect x="1.4" y="8.2" width="6" height="4.2" rx="2.1" transform="rotate(-40 4.4 10.3)"/><path d="M5.2 8.8 L8.8 5.2"/></g></svg><div class="box"><span class="v" style="letter-spacing:-0.056px;top:5px">All at Once</span><svg width="14" height="9" viewBox="0 0 14 9"><path d="M1.5 1.5 L7 7 L12.5 1.5" stroke="#a6a9ab" stroke-width="1.5" fill="none"/></svg></div></div>
<div class="row" style="top:586px"><span class="l" style="letter-spacing:-0.032px;left:9px">Surface Mode</span><div class="box"><span class="v" style="letter-spacing:0.254px;top:5px">Normal</span><svg width="14" height="9" viewBox="0 0 14 9"><path d="M1.5 1.5 L7 7 L12.5 1.5" stroke="#a6a9ab" stroke-width="1.5" fill="none"/></svg></div></div>
  </div></div>
  <div id="sb"></div>
  <div id="divider"></div>
  <div id="rec"><svg width="8" height="12" viewBox="0 0 8 12"><path d="M6.5 1 L1.5 6 L6.5 11" stroke="#2c6ae0" stroke-width="1.7" fill="none"/></svg><span style="letter-spacing:0.030px">Recommended</span></div>
  <div id="drag"><i></i><i></i><i></i></div>
</div>
<div id="action">
  <svg class="clock" width="20" height="20" viewBox="0 0 20 20"><circle cx="10" cy="10" r="8.6" stroke="#d0d1d2" stroke-width="1.2" fill="none"/><path d="M10 4.5 V10 L13 13" stroke="#d0d1d2" stroke-width="1.2" fill="none"/></svg>
  <span class="time" style="letter-spacing:0.166px">23 hours 21 minutes</span>
  <svg class="info" width="20" height="20" viewBox="0 0 20 20"><circle cx="10" cy="10" r="9.6" fill="#d9d9d9"/><text x="10" y="15.2" text-anchor="middle" font-family="Liberation Serif, serif" font-weight="bold" font-style="italic" font-size="15" fill="#272c30">i</text></svg>
  <svg class="mat" width="16" height="18" viewBox="0 0 16 18"><path d="M1 1 V15 M4 1 V15 M7 1 V17 M10 1 V17 M13 1 V15 M15.2 1 V15" stroke="#b9bbbc" stroke-width="1.3" fill="none"/></svg>
  <span class="mattxt" style="letter-spacing:-0.294px">85g · 28.58m</span>
  <div class="btn prev">Preview</div>
  <div class="btn save">Save to Disk</div>
</div>
<div id="taskbar"><span>21:30</span></div>

</body></html>
